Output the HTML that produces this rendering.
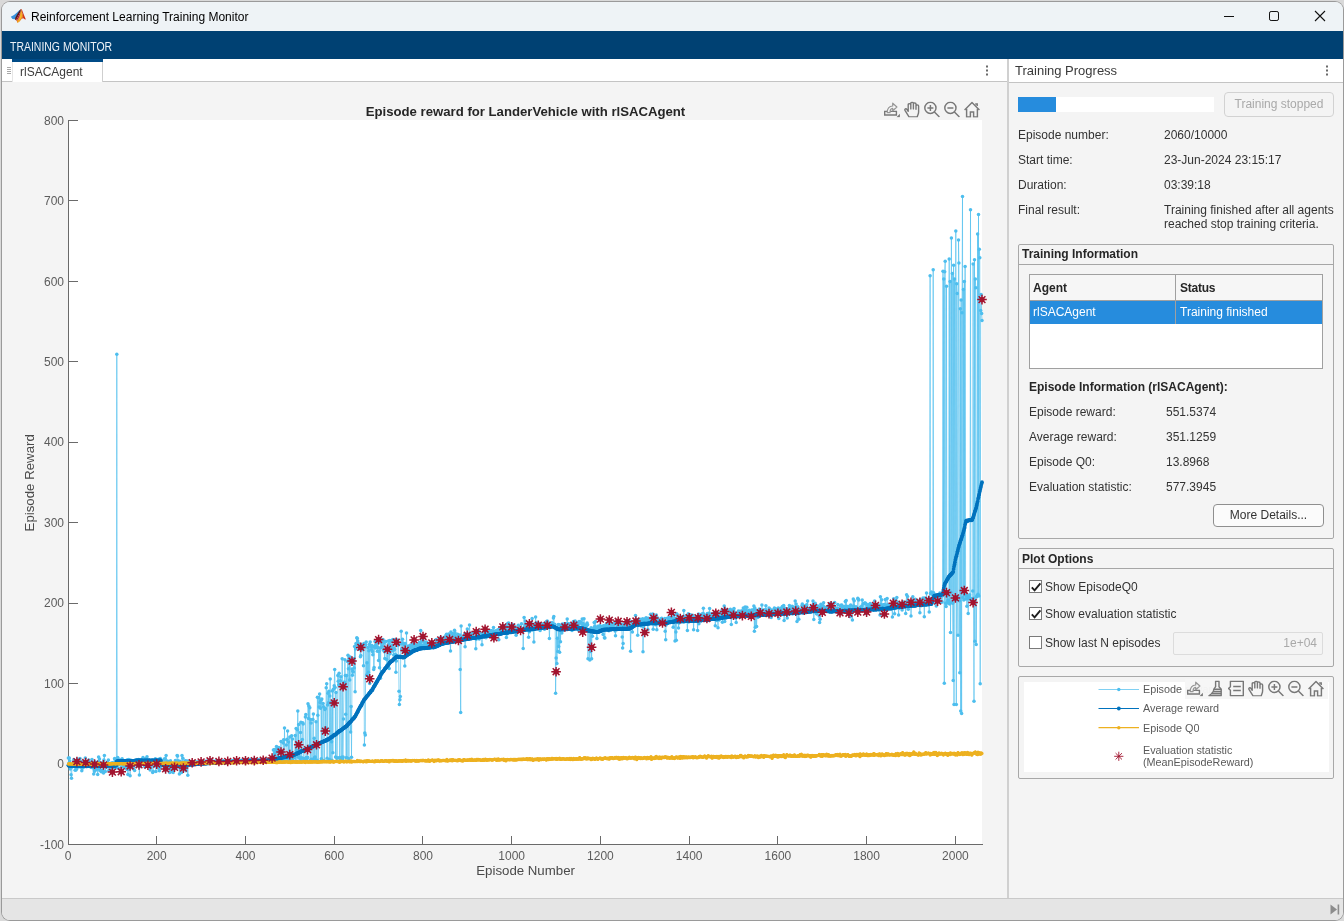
<!DOCTYPE html>
<html lang="en">
<head>
<meta charset="utf-8">
<title>Reinforcement Learning Training Monitor</title>
<style>
*{box-sizing:border-box;margin:0;padding:0}
html,body{width:1344px;height:921px;overflow:hidden}
body{position:relative;background:#d9d9d9;font-family:"Liberation Sans",Arial,sans-serif;font-size:12px;color:#2b2b2b}
.abs{position:absolute}
#win{position:absolute;left:2px;top:2px;width:1341px;height:918px;background:#f4f4f4;border-radius:8px;overflow:hidden;box-shadow:0 0 0 1px #9a9a9a;will-change:transform}
#titlebar{position:absolute;left:0;top:0;width:1341px;height:29px;background:#eef3f6}
#titletext{position:absolute;left:29px;top:7px;font-size:12px;line-height:16px;color:#000;white-space:nowrap}
#strip{position:absolute;left:0;top:29px;width:1341px;height:28px;background:#004173}
#striptext{position:absolute;left:8px;top:9px;font-size:12px;line-height:14px;color:#eef3f8;white-space:nowrap;transform:scaleX(0.872);transform-origin:0 0}
#tabbar{position:absolute;left:0;top:57px;width:1005px;height:23px;background:#fff;border-bottom:1px solid #c4c4c4}
#tab{position:absolute;left:10px;top:0;width:91px;height:23px;background:#fff;border-right:1px solid #cfcfcf;border-left:1px solid #e6e6e6}
#tab i{position:absolute;left:-1px;right:-1px;top:0;height:3px;background:#004b87}
#tab span{position:absolute;left:7px;top:6px;font-size:12px;line-height:14px;color:#3c3c3c}
#rhead{position:absolute;left:1006px;top:57px;width:335px;height:24px;background:#fff;border-bottom:1px solid #c4c4c4}
#rhead span{position:absolute;left:7px;top:4px;font-size:13px;line-height:16px;color:#3a3a3a}
#vdiv{position:absolute;left:1005px;top:57px;width:2px;height:860px;background:#d0d0d0}
#status{position:absolute;left:0;top:896px;width:1341px;height:22px;background:#e5e5e5;border-top:1px solid #c9c9c9}
.lbl{position:absolute;font-size:12px;line-height:14px;color:#333;white-space:nowrap}
.b{font-weight:bold}
.panel{position:absolute;border:1px solid #a8a8a8;background:#f4f4f4;border-radius:2px}
.phead{position:absolute;left:0;top:0;right:0;height:20px;border-bottom:1px solid #a6a6a6}
.phead span{position:absolute;left:3px;top:2px;font-weight:bold;font-size:12px;line-height:14px;color:#262626}
.btn{position:absolute;border:1px solid #8f8f8f;border-radius:4px;background:#fbfbfb;text-align:center;font-size:12px;color:#333}
.cb{position:absolute;width:13px;height:13px;border:1px solid #7a7a7a;background:#fff}
</style>
</head>
<body>
<div id="win">
  <div id="titlebar">
    <div id="titletext">Reinforcement Learning Training Monitor</div>
  </div>
  <div id="strip"><div id="striptext">TRAINING MONITOR</div></div>
  <div id="tabbar"><div id="tab"><i></i><span>rlSACAgent</span></div></div>
  <div id="rhead"><span>Training Progress</span></div>
  <div id="vdiv"></div>
  <svg id="chart" width="1006" height="840" viewBox="0 60 1006 840" style="position:absolute;left:-2px;top:58px">
<defs>
<marker id="mr" markerWidth="5" markerHeight="5" refX="2.5" refY="2.5" markerUnits="userSpaceOnUse"><circle cx="2.5" cy="2.5" r="1.75" fill="#4dbeee"/></marker>
<marker id="ma" markerWidth="5" markerHeight="5" refX="2.5" refY="2.5" markerUnits="userSpaceOnUse"><circle cx="2.5" cy="2.5" r="1.9" fill="#0072bd"/></marker>
<marker id="mq" markerWidth="4" markerHeight="4" refX="2" refY="2" markerUnits="userSpaceOnUse"><circle cx="2" cy="2" r="1.55" fill="#edb120"/></marker>
<g id="st" stroke="#a2142f" stroke-width="1.5"><path d="M-4.8 0H4.8M0 -4.8V4.8M-3.4 -3.4L3.4 3.4M-3.4 3.4L3.4 -3.4"/><circle r="2.6" fill="#a2142f" stroke="none"/></g>
</defs>
<rect x="68" y="120" width="914" height="725" fill="#fff"/>
<g stroke="#6a6a6a" stroke-width="1" fill="none" shape-rendering="crispEdges">
<path d="M68.5 120V844.5H982.5"/>
<path d="M68.5 844.5v-9"/>
<path d="M156.5 844.5v-9"/>
<path d="M245.5 844.5v-9"/>
<path d="M334.5 844.5v-9"/>
<path d="M422.5 844.5v-9"/>
<path d="M511.5 844.5v-9"/>
<path d="M600.5 844.5v-9"/>
<path d="M689.5 844.5v-9"/>
<path d="M777.5 844.5v-9"/>
<path d="M866.5 844.5v-9"/>
<path d="M955.5 844.5v-9"/>
<path d="M68.5 844.5h9"/>
<path d="M68.5 764.5h9"/>
<path d="M68.5 683.5h9"/>
<path d="M68.5 603.5h9"/>
<path d="M68.5 522.5h9"/>
<path d="M68.5 442.5h9"/>
<path d="M68.5 361.5h9"/>
<path d="M68.5 281.5h9"/>
<path d="M68.5 200.5h9"/>
<path d="M68.5 120.5h9"/>
</g>
<g fill="none" stroke-linejoin="round">
<polyline points="68.4,758.1 68.9,763.3 69.3,758.0 69.8,761.0 70.2,768.9 70.7,764.5 71.1,774.8 71.5,778.3 72.0,767.0 72.4,766.6 72.9,764.2 73.3,765.1 73.8,759.6 74.2,761.7 74.7,766.2 75.1,770.2 75.5,762.1 76.0,770.0 76.4,769.0 76.9,768.6 77.3,762.8 77.8,759.2 78.2,764.8 78.6,762.1 79.1,766.6 79.5,765.1 80.0,758.6 80.4,767.1 80.9,762.1 81.3,762.2 81.8,770.7 82.2,768.2 82.6,762.1 83.1,763.5 83.5,765.4 84.0,767.1 84.4,762.6 84.9,765.3 85.3,758.1 85.7,764.6 86.2,762.4 86.6,766.7 87.1,762.6 87.5,763.2 88.0,766.0 88.4,766.0 88.9,760.0 89.3,763.9 89.7,762.2 90.2,763.1 90.6,763.9 91.1,767.5 91.5,765.1 92.0,759.4 92.4,762.3 92.8,767.8 93.3,763.5 93.7,774.0 94.2,770.0 94.6,771.3 95.1,761.9 95.5,766.2 96.0,764.5 96.4,769.6 96.8,766.1 97.3,764.6 97.7,774.5 98.2,761.8 98.6,757.1 99.1,768.8 99.5,758.9 99.9,770.4 100.4,765.3 100.8,765.4 101.3,771.7 101.7,770.4 102.2,770.6 102.6,762.4 103.1,765.4 103.5,773.1 103.9,759.9 104.4,755.6 104.8,766.1 105.3,771.6 105.7,765.7 106.2,767.6 106.6,766.6 107.0,765.2 107.5,762.0 107.9,764.1 108.4,760.1 108.8,770.4 109.3,764.3 109.7,764.0 110.2,765.7 110.6,763.6 111.0,763.4 111.5,769.2 111.9,762.9 112.4,766.5 112.8,762.8 113.3,765.8 113.7,767.4 114.1,765.2 114.6,758.5 115.0,759.6 115.5,761.5 115.9,761.9 116.4,767.7 116.8,354.3 117.2,760.9 117.7,757.4 118.1,758.7 118.6,768.4 119.0,763.7 119.5,764.3 119.9,763.7 120.4,761.9 120.8,760.1 121.2,767.4 121.7,761.0 122.1,758.8 122.6,762.3 123.0,766.8 123.5,766.5 123.9,766.4 124.3,765.2 124.8,766.2 125.2,764.3 125.7,767.8 126.1,760.6 126.6,766.8 127.0,769.6 127.5,759.8 127.9,774.5 128.3,769.3 128.8,759.5 129.2,765.5 129.7,761.8 130.1,775.7 130.6,760.3 131.0,761.6 131.4,763.8 131.9,765.7 132.3,760.8 132.8,762.3 133.2,768.7 133.7,764.6 134.1,765.2 134.6,770.4 135.0,762.4 135.4,759.9 135.9,761.1 136.3,763.2 136.8,765.1 137.2,760.1 137.7,765.8 138.1,760.9 138.5,759.5 139.0,766.0 139.4,775.1 139.9,762.5 140.3,766.5 140.8,762.0 141.2,763.6 141.7,764.1 142.1,759.8 142.5,760.4 143.0,757.4 143.4,764.6 143.9,758.9 144.3,764.8 144.8,766.8 145.2,763.8 145.6,763.6 146.1,758.4 146.5,758.4 147.0,756.8 147.4,761.3 147.9,766.2 148.3,766.0 148.8,766.4 149.2,764.6 149.6,760.5 150.1,770.1 150.5,767.8 151.0,764.4 151.4,765.3 151.9,760.2 152.3,763.6 152.7,772.5 153.2,771.4 153.6,763.1 154.1,760.8 154.5,765.9 155.0,765.1 155.4,758.7 155.9,771.6 156.3,765.5 156.7,764.2 157.2,761.5 157.6,765.4 158.1,766.4 158.5,759.3 159.0,769.0 159.4,770.8 159.8,767.4 160.3,758.4 160.7,764.2 161.2,762.8 161.6,765.9 162.1,760.7 162.5,764.4 162.9,763.3 163.4,763.8 163.8,764.5 164.3,759.0 164.7,770.0 165.2,758.7 165.6,766.6 166.1,755.6 166.5,769.1 166.9,767.0 167.4,760.9 167.8,762.8 168.3,761.8 168.7,768.8 169.2,767.8 169.6,772.6 170.0,766.4 170.5,760.7 170.9,771.7 171.4,765.4 171.8,766.5 172.3,771.5 172.7,769.0 173.2,772.6 173.6,769.9 174.0,766.2 174.5,763.9 174.9,763.5 175.4,760.4 175.8,765.6 176.3,763.1 176.7,767.4 177.1,755.6 177.6,756.0 178.0,760.7 178.5,761.7 178.9,763.3 179.4,774.1 179.8,761.3 180.3,761.9 180.7,769.2 181.1,768.0 181.6,772.6 182.0,755.6 182.5,767.0 182.9,758.2 183.4,768.4 183.8,765.3 184.2,764.9 184.7,762.5 185.1,760.9 185.6,760.8 186.0,770.8 186.5,768.0 186.9,765.6 187.4,761.0 187.8,775.3 188.2,762.6 188.7,762.2 189.1,762.6 189.6,761.8 190.0,762.8 190.5,762.7 190.9,762.2 191.3,763.3 191.8,761.6 192.2,762.9 192.7,762.3 193.1,762.4 193.6,763.0 194.0,762.5 194.5,762.5 194.9,761.8 195.3,762.2 195.8,763.5 196.2,761.9 196.7,762.9 197.1,762.4 197.6,762.5 198.0,762.6 198.4,762.2 198.9,761.5 199.3,761.2 199.8,762.1 200.2,762.7 200.7,761.7 201.1,762.8 201.6,762.1 202.0,761.4 202.4,762.1 202.9,762.3 203.3,761.2 203.8,762.8 204.2,762.7 204.7,762.1 205.1,761.6 205.5,761.8 206.0,761.3 206.4,762.5 206.9,761.2 207.3,761.8 207.8,762.0 208.2,761.3 208.6,762.7 209.1,760.2 209.5,762.9 210.0,761.4 210.4,761.1 210.9,762.2 211.3,761.5 211.8,761.3 212.2,761.2 212.6,761.1 213.1,762.3 213.5,761.7 214.0,762.5 214.4,763.1 214.9,761.2 215.3,761.5 215.7,762.1 216.2,761.8 216.6,760.6 217.1,761.4 217.5,762.3 218.0,761.4 218.4,761.1 218.9,761.6 219.3,762.4 219.7,761.6 220.2,762.1 220.6,761.7 221.1,761.0 221.5,761.9 222.0,762.2 222.4,761.4 222.8,761.1 223.3,761.0 223.7,761.8 224.2,761.6 224.6,761.4 225.1,762.2 225.5,761.8 226.0,761.4 226.4,761.3 226.8,761.3 227.3,761.5 227.7,762.4 228.2,762.0 228.6,761.0 229.1,760.5 229.5,760.5 229.9,761.8 230.4,761.2 230.8,761.0 231.3,761.4 231.7,761.0 232.2,762.0 232.6,760.7 233.1,761.1 233.5,761.3 233.9,760.9 234.4,762.3 234.8,761.1 235.3,761.4 235.7,762.0 236.2,760.8 236.6,761.6 237.0,760.5 237.5,761.8 237.9,761.2 238.4,760.8 238.8,761.0 239.3,760.7 239.7,760.5 240.2,760.9 240.6,761.0 241.0,761.3 241.5,761.0 241.9,761.0 242.4,760.1 242.8,760.8 243.3,760.7 243.7,761.6 244.1,761.0 244.6,759.5 245.0,760.0 245.5,761.0 245.9,761.1 246.4,759.8 246.8,760.3 247.3,761.3 247.7,760.2 248.1,760.9 248.6,761.4 249.0,760.7 249.5,760.9 249.9,759.6 250.4,760.8 250.8,760.8 251.2,761.3 251.7,759.9 252.1,760.1 252.6,760.5 253.0,760.5 253.5,760.3 253.9,759.3 254.3,760.9 254.8,760.3 255.2,759.5 255.7,761.0 256.1,760.4 256.6,761.1 257.0,760.5 257.5,760.7 257.9,759.8 258.3,760.2 258.8,760.7 259.2,760.2 259.7,760.8 260.1,760.1 260.6,759.7 261.0,760.2 261.4,760.1 261.9,759.8 262.3,760.2 262.8,760.0 263.2,760.8 263.7,761.2 264.1,759.9 264.6,759.9 265.0,759.6 265.4,760.8 265.9,759.6 266.3,761.0 266.8,760.1 267.2,760.6 267.7,759.4 268.1,761.0 268.5,759.6 269.0,761.4 269.4,760.3 269.9,760.4 270.3,761.3 270.8,759.9 271.2,759.6 271.7,758.9 272.1,759.4 272.5,758.2 273.0,759.0 273.4,750.0 273.9,756.8 274.3,749.6 274.8,753.6 275.2,749.7 275.6,757.9 276.1,750.4 276.5,746.6 277.0,757.1 277.4,748.9 277.9,759.2 278.3,760.7 278.8,747.4 279.2,758.3 279.6,758.5 280.1,761.4 280.5,760.2 281.0,741.5 281.4,760.8 281.9,761.2 282.3,761.1 282.7,758.4 283.2,742.9 283.6,739.7 284.1,760.1 284.5,727.9 285.0,760.5 285.4,758.7 285.9,761.2 286.3,745.0 286.7,739.7 287.2,739.3 287.6,731.1 288.1,758.7 288.5,742.0 289.0,760.2 289.4,758.1 289.8,736.9 290.3,760.3 290.7,761.4 291.2,759.6 291.6,735.7 292.1,758.4 292.5,738.9 293.0,758.7 293.4,757.5 293.8,757.0 294.3,757.4 294.7,756.9 295.2,735.5 295.6,761.4 296.1,728.4 296.5,750.4 296.9,761.4 297.4,729.7 297.8,711.0 298.3,757.3 298.7,724.5 299.2,756.7 299.6,745.5 300.0,759.1 300.5,732.6 300.9,722.2 301.4,761.6 301.8,757.8 302.3,739.4 302.7,722.8 303.2,723.9 303.6,758.5 304.0,759.6 304.5,761.4 304.9,759.8 305.4,717.0 305.8,714.6 306.3,757.6 306.7,760.5 307.1,758.3 307.6,757.3 308.0,703.7 308.5,718.4 308.9,706.1 309.4,745.9 309.8,707.7 310.3,760.0 310.7,719.4 311.1,722.9 311.6,759.3 312.0,759.6 312.5,759.6 312.9,719.4 313.4,714.1 313.8,759.4 314.2,738.3 314.7,757.6 315.1,756.9 315.6,761.5 316.0,721.7 316.5,760.1 316.9,761.0 317.4,697.3 317.8,715.2 318.2,761.2 318.7,697.5 319.1,706.9 319.6,693.9 320.0,702.5 320.5,708.2 320.9,700.3 321.3,758.8 321.8,699.1 322.2,761.5 322.7,760.8 323.1,703.4 323.6,706.7 324.0,761.1 324.5,761.1 324.9,709.4 325.3,708.6 325.8,728.0 326.2,687.8 326.7,683.7 327.1,758.2 327.6,705.0 328.0,693.2 328.4,702.7 328.9,691.3 329.3,759.5 329.8,696.1 330.2,678.9 330.7,761.2 331.1,702.6 331.6,741.8 332.0,760.3 332.4,690.9 332.9,752.7 333.3,689.3 333.8,689.0 334.2,685.8 334.7,669.4 335.1,687.6 335.5,757.0 336.0,692.5 336.4,761.2 336.9,758.0 337.3,758.1 337.8,675.6 338.2,681.3 338.7,684.7 339.1,673.2 339.5,757.6 340.0,758.8 340.4,680.8 340.9,676.7 341.3,760.6 341.8,757.3 342.2,658.7 342.6,758.9 343.1,757.1 343.5,718.9 344.0,682.7 344.4,682.0 344.9,659.8 345.3,675.5 345.7,714.2 346.2,757.8 346.6,675.6 347.1,758.1 347.5,661.4 348.0,655.3 348.4,668.7 348.9,758.8 349.3,658.6 349.7,680.1 350.2,656.9 350.6,732.1 351.1,706.4 351.5,757.2 352.0,669.1 352.4,675.2 352.8,671.2 353.3,672.0 353.7,658.8 354.2,667.9 354.6,646.6 355.1,691.7 355.5,649.1 356.0,643.4 356.4,644.4 356.8,637.8 357.3,638.4 357.7,641.1 358.2,643.3 358.6,646.6 359.1,649.3 359.5,645.7 359.9,644.2 360.4,656.7 360.8,655.5 361.3,645.0 361.7,645.0 362.2,649.0 362.6,649.7 363.1,647.1 363.5,665.8 363.9,643.4 364.4,745.1 364.8,733.0 365.3,735.1 365.7,645.0 366.2,641.9 366.6,675.1 367.0,662.7 367.5,675.6 367.9,647.4 368.4,672.3 368.8,650.7 369.3,644.4 369.7,683.6 370.2,642.1 370.6,646.0 371.0,646.6 371.5,649.4 371.9,645.5 372.4,651.5 372.8,654.7 373.3,646.8 373.7,669.4 374.1,667.5 374.6,646.2 375.0,641.4 375.5,648.1 375.9,645.2 376.4,647.0 376.8,642.8 377.3,651.3 377.7,647.5 378.1,638.8 378.6,660.4 379.0,651.3 379.5,667.8 379.9,648.1 380.4,678.2 380.8,642.8 381.2,647.8 381.7,640.3 382.1,646.0 382.6,640.7 383.0,639.5 383.5,650.3 383.9,643.0 384.4,651.7 384.8,658.5 385.2,641.6 385.7,641.6 386.1,648.3 386.6,659.4 387.0,665.2 387.5,648.7 387.9,665.9 388.3,641.1 388.8,644.0 389.2,668.5 389.7,640.5 390.1,653.8 390.6,648.1 391.0,641.0 391.5,647.4 391.9,651.1 392.3,645.5 392.8,639.5 393.2,650.6 393.7,655.1 394.1,648.6 394.6,649.6 395.0,639.4 395.4,654.5 395.9,672.2 396.3,661.0 396.8,656.3 397.2,644.7 397.7,639.9 398.1,645.3 398.5,642.5 399.0,691.3 399.4,704.5 399.9,699.7 400.3,696.5 400.8,643.7 401.2,631.3 401.7,648.7 402.1,649.9 402.5,639.3 403.0,642.9 403.4,652.0 403.9,644.4 404.3,649.7 404.8,665.9 405.2,643.4 405.6,655.5 406.1,654.4 406.5,632.9 407.0,651.9 407.4,651.1 407.9,653.2 408.3,646.0 408.8,648.3 409.2,650.9 409.6,647.4 410.1,653.4 410.5,645.0 411.0,648.1 411.4,646.1 411.9,652.7 412.3,647.5 412.7,644.0 413.2,648.5 413.6,649.4 414.1,644.9 414.5,644.2 415.0,645.3 415.4,647.3 415.9,649.5 416.3,646.5 416.7,647.3 417.2,646.0 417.6,644.7 418.1,648.8 418.5,646.5 419.0,645.7 419.4,642.6 419.8,645.9 420.3,644.2 420.7,630.5 421.2,642.1 421.6,646.1 422.1,645.9 422.5,648.1 423.0,640.3 423.4,645.2 423.8,645.9 424.3,645.3 424.7,642.4 425.2,645.5 425.6,646.1 426.1,645.5 426.5,641.9 426.9,643.6 427.4,647.5 427.8,647.5 428.3,643.6 428.7,643.4 429.2,644.6 429.6,645.4 430.1,644.0 430.5,648.1 430.9,646.2 431.4,644.3 431.8,641.8 432.3,646.3 432.7,643.1 433.2,646.4 433.6,643.5 434.0,644.8 434.5,646.8 434.9,646.6 435.4,646.8 435.8,640.1 436.3,639.6 436.7,641.7 437.2,643.4 437.6,642.4 438.0,644.8 438.5,645.0 438.9,645.0 439.4,641.3 439.8,641.1 440.3,642.2 440.7,637.4 441.1,640.2 441.6,643.2 442.0,640.2 442.5,641.7 442.9,640.4 443.4,639.9 443.8,640.8 444.2,637.3 444.7,638.6 445.1,637.6 445.6,637.6 446.0,635.5 446.5,634.3 446.9,641.5 447.4,638.3 447.8,639.2 448.2,639.3 448.7,633.9 449.1,640.3 449.6,637.9 450.0,638.5 450.5,650.9 450.9,632.1 451.3,640.3 451.8,638.6 452.2,633.5 452.7,636.6 453.1,638.5 453.6,636.8 454.0,634.6 454.5,630.3 454.9,632.6 455.3,636.3 455.8,640.5 456.2,638.4 456.7,639.8 457.1,638.6 457.6,634.2 458.0,639.0 458.4,638.9 458.9,638.5 459.3,637.8 459.8,634.9 460.2,669.5 460.7,712.6 461.1,626.1 461.6,638.9 462.0,639.6 462.4,637.4 462.9,637.9 463.3,637.7 463.8,636.0 464.2,639.2 464.7,634.0 465.1,646.8 465.5,637.1 466.0,637.9 466.4,638.1 466.9,633.6 467.3,629.0 467.8,637.1 468.2,635.2 468.7,633.9 469.1,636.7 469.5,624.9 470.0,634.0 470.4,634.3 470.9,637.1 471.3,634.8 471.8,633.3 472.2,637.8 472.6,633.9 473.1,637.0 473.5,632.9 474.0,637.3 474.4,638.3 474.9,637.3 475.3,631.9 475.8,648.8 476.2,639.2 476.6,632.9 477.1,634.4 477.5,636.7 478.0,635.1 478.4,630.4 478.9,636.8 479.3,638.9 479.7,635.9 480.2,637.3 480.6,633.3 481.1,637.2 481.5,634.9 482.0,644.7 482.4,635.0 482.9,634.9 483.3,633.0 483.7,632.4 484.2,635.1 484.6,634.2 485.1,630.9 485.5,632.3 486.0,637.7 486.4,633.7 486.8,634.7 487.3,634.1 487.7,634.6 488.2,633.5 488.6,631.0 489.1,630.8 489.5,631.4 489.9,633.3 490.4,635.5 490.8,630.5 491.3,630.7 491.7,632.8 492.2,630.9 492.6,631.5 493.1,631.8 493.5,627.5 493.9,632.1 494.4,633.1 494.8,631.4 495.3,631.1 495.7,631.2 496.2,632.6 496.6,631.0 497.0,631.3 497.5,632.7 497.9,629.7 498.4,632.7 498.8,639.7 499.3,629.7 499.7,632.2 500.2,627.8 500.6,629.0 501.0,630.6 501.5,628.4 501.9,632.6 502.4,628.4 502.8,633.3 503.3,626.1 503.7,626.1 504.1,630.4 504.6,628.2 505.0,631.6 505.5,628.4 505.9,626.4 506.4,637.6 506.8,633.9 507.3,630.4 507.7,623.5 508.1,631.6 508.6,623.0 509.0,631.7 509.5,628.5 509.9,627.5 510.4,627.5 510.8,632.8 511.2,628.3 511.7,628.2 512.1,624.4 512.6,631.9 513.0,629.7 513.5,624.9 513.9,631.7 514.4,628.9 514.8,626.8 515.2,628.8 515.7,628.5 516.1,635.2 516.6,631.5 517.0,630.8 517.5,629.9 517.9,629.8 518.3,625.3 518.8,629.0 519.2,629.5 519.7,630.1 520.1,628.2 520.6,627.5 521.0,628.0 521.5,623.8 521.9,629.3 522.3,631.0 522.8,628.6 523.2,648.6 523.7,629.3 524.1,617.4 524.6,627.5 525.0,625.1 525.4,621.1 525.9,625.2 526.3,624.4 526.8,626.6 527.2,626.1 527.7,627.2 528.1,628.6 528.6,637.3 529.0,627.9 529.4,631.7 529.9,627.1 530.3,625.8 530.8,623.0 531.2,625.7 531.7,626.8 532.1,618.5 532.5,630.1 533.0,626.0 533.4,628.3 533.9,642.0 534.3,624.0 534.8,626.6 535.2,625.1 535.6,617.0 536.1,624.1 536.5,622.8 537.0,624.4 537.4,624.6 537.9,627.3 538.3,626.7 538.8,625.7 539.2,624.1 539.6,623.6 540.1,630.4 540.5,628.5 541.0,624.3 541.4,626.1 541.9,626.0 542.3,625.5 542.7,624.7 543.2,624.0 543.6,623.7 544.1,627.6 544.5,629.3 545.0,624.2 545.4,624.8 545.9,623.6 546.3,621.8 546.7,625.2 547.2,621.1 547.6,621.7 548.1,623.6 548.5,625.9 549.0,626.5 549.4,638.6 549.8,625.4 550.3,623.6 550.7,624.2 551.2,624.3 551.6,622.8 552.1,623.2 552.5,623.2 553.0,625.6 553.4,618.1 553.8,616.5 554.3,625.0 554.7,624.2 555.2,627.0 555.6,693.3 556.1,657.9 556.5,628.5 556.9,663.5 557.4,638.3 557.8,651.4 558.3,624.6 558.7,646.6 559.2,624.8 559.6,652.2 560.1,626.4 560.5,641.8 560.9,625.7 561.4,625.2 561.8,632.9 562.3,623.9 562.7,627.8 563.2,624.4 563.6,630.1 564.0,627.6 564.5,623.8 564.9,628.9 565.4,625.1 565.8,627.8 566.3,627.3 566.7,624.2 567.2,618.9 567.6,623.5 568.0,625.5 568.5,623.8 568.9,629.3 569.4,625.1 569.8,623.9 570.3,628.2 570.7,624.8 571.1,626.3 571.6,625.6 572.0,630.4 572.5,625.2 572.9,627.0 573.4,621.5 573.8,627.3 574.3,627.8 574.7,624.0 575.1,621.0 575.6,626.7 576.0,625.5 576.5,623.4 576.9,622.5 577.4,625.4 577.8,628.6 578.2,625.9 578.7,630.2 579.1,621.6 579.6,623.2 580.0,622.8 580.5,621.7 580.9,628.7 581.3,629.3 581.8,628.8 582.2,618.9 582.7,624.8 583.1,623.5 583.6,626.2 584.0,618.8 584.5,626.4 584.9,626.0 585.3,625.5 585.8,629.0 586.2,626.1 586.7,624.3 587.1,622.9 587.6,624.7 588.0,658.7 588.4,630.0 588.9,629.7 589.3,629.9 589.8,660.0 590.2,629.4 590.7,651.4 591.1,627.7 591.6,658.7 592.0,630.1 592.4,636.3 592.9,630.8 593.3,629.6 593.8,628.1 594.2,622.4 594.7,626.6 595.1,628.4 595.5,621.6 596.0,630.3 596.4,629.9 596.9,638.6 597.3,628.7 597.8,626.2 598.2,627.6 598.7,629.6 599.1,629.6 599.5,626.2 600.0,625.6 600.4,631.6 600.9,626.9 601.3,627.8 601.8,629.9 602.2,626.5 602.6,626.8 603.1,634.4 603.5,625.7 604.0,626.1 604.4,637.8 604.9,638.1 605.3,627.5 605.8,627.8 606.2,624.8 606.6,623.4 607.1,623.5 607.5,628.3 608.0,627.4 608.4,627.8 608.9,630.8 609.3,625.2 609.7,625.9 610.2,625.6 610.6,629.7 611.1,625.4 611.5,623.0 612.0,627.1 612.4,629.2 612.9,625.8 613.3,624.2 613.7,624.9 614.2,629.4 614.6,623.2 615.1,631.0 615.5,635.8 616.0,623.3 616.4,621.0 616.8,627.7 617.3,626.8 617.7,629.0 618.2,624.0 618.6,626.8 619.1,625.5 619.5,623.5 620.0,622.8 620.4,628.0 620.8,626.8 621.3,624.6 621.7,626.5 622.2,637.0 622.6,647.9 623.1,643.4 623.5,624.6 623.9,626.0 624.4,624.0 624.8,625.0 625.3,626.4 625.7,627.4 626.2,622.3 626.6,624.4 627.0,626.9 627.5,625.2 627.9,624.2 628.4,626.6 628.8,620.8 629.3,628.9 629.7,625.8 630.2,625.4 630.6,651.2 631.0,625.0 631.5,621.6 631.9,624.6 632.4,632.0 632.8,624.3 633.3,624.2 633.7,624.8 634.1,622.4 634.6,623.1 635.0,621.9 635.5,615.5 635.9,621.2 636.4,619.6 636.8,621.1 637.3,621.2 637.7,635.3 638.1,624.8 638.6,621.5 639.0,622.7 639.5,621.5 639.9,619.2 640.4,621.2 640.8,619.5 641.2,625.9 641.7,621.5 642.1,622.4 642.6,618.7 643.0,651.7 643.5,626.6 643.9,622.2 644.4,621.4 644.8,619.0 645.2,620.2 645.7,620.8 646.1,617.8 646.6,619.9 647.0,618.6 647.5,623.5 647.9,629.4 648.3,618.2 648.8,620.0 649.2,619.0 649.7,622.3 650.1,619.8 650.6,614.2 651.0,620.5 651.5,619.2 651.9,619.0 652.3,623.7 652.8,614.0 653.2,629.2 653.7,621.8 654.1,619.8 654.6,619.4 655.0,619.0 655.4,624.7 655.9,617.0 656.3,614.9 656.8,629.7 657.2,619.3 657.7,618.1 658.1,619.6 658.6,620.5 659.0,621.6 659.4,622.1 659.9,624.1 660.3,621.1 660.8,623.0 661.2,618.8 661.7,618.2 662.1,619.8 662.5,622.6 663.0,621.2 663.4,622.2 663.9,621.3 664.3,623.0 664.8,618.4 665.2,631.3 665.7,639.7 666.1,625.0 666.5,623.1 667.0,622.5 667.4,618.2 667.9,622.0 668.3,622.5 668.8,617.6 669.2,619.3 669.6,617.5 670.1,619.0 670.5,619.9 671.0,618.3 671.4,619.7 671.9,617.4 672.3,620.5 672.7,620.5 673.2,627.3 673.6,621.9 674.1,615.3 674.5,618.7 675.0,641.0 675.4,618.6 675.9,632.1 676.3,640.2 676.7,613.7 677.2,614.7 677.6,615.6 678.1,619.7 678.5,628.0 679.0,623.1 679.4,620.6 679.8,621.0 680.3,618.6 680.7,619.7 681.2,617.1 681.6,618.1 682.1,617.8 682.5,617.2 683.0,619.3 683.4,618.3 683.8,610.6 684.3,622.0 684.7,617.4 685.2,619.3 685.6,616.9 686.1,615.8 686.5,618.1 686.9,620.0 687.4,630.5 687.8,617.5 688.3,613.8 688.7,621.9 689.2,619.4 689.6,617.9 690.1,615.7 690.5,614.8 690.9,616.6 691.4,615.8 691.8,617.8 692.3,619.7 692.7,615.3 693.2,617.2 693.6,629.7 694.0,618.6 694.5,620.3 694.9,617.5 695.4,619.6 695.8,619.4 696.3,617.1 696.7,619.4 697.2,620.7 697.6,630.5 698.0,617.0 698.5,614.0 698.9,623.8 699.4,617.1 699.8,614.9 700.3,615.0 700.7,619.8 701.1,616.6 701.6,616.8 702.0,614.1 702.5,619.0 702.9,613.8 703.4,608.2 703.8,614.0 704.3,620.0 704.7,615.8 705.1,618.3 705.6,616.5 706.0,615.8 706.5,617.2 706.9,617.1 707.4,613.4 707.8,617.5 708.2,617.4 708.7,613.5 709.1,613.2 709.6,608.5 710.0,615.8 710.5,618.7 710.9,616.4 711.4,614.3 711.8,618.3 712.2,615.7 712.7,613.6 713.1,619.0 713.6,617.4 714.0,617.4 714.5,615.1 714.9,617.3 715.3,625.7 715.8,614.0 716.2,619.6 716.7,620.4 717.1,613.2 717.6,616.9 718.0,627.7 718.4,614.6 718.9,613.9 719.3,619.9 719.8,617.4 720.2,612.7 720.7,616.2 721.1,614.8 721.6,617.1 722.0,610.0 722.4,622.3 722.9,616.1 723.3,615.4 723.8,614.3 724.2,606.1 724.7,621.4 725.1,609.1 725.5,610.1 726.0,613.1 726.4,615.8 726.9,611.4 727.3,610.6 727.8,615.8 728.2,614.0 728.7,611.6 729.1,611.2 729.5,614.9 730.0,611.1 730.4,609.2 730.9,614.5 731.3,624.4 731.8,611.0 732.2,612.7 732.6,611.4 733.1,612.0 733.5,609.8 734.0,608.6 734.4,611.9 734.9,613.3 735.3,613.7 735.8,617.9 736.2,622.6 736.6,615.1 737.1,615.6 737.5,614.1 738.0,616.5 738.4,611.0 738.9,612.2 739.3,615.8 739.7,611.6 740.2,611.3 740.6,614.8 741.1,612.4 741.5,613.1 742.0,610.8 742.4,613.4 742.9,611.9 743.3,608.0 743.7,612.0 744.2,611.7 744.6,610.0 745.1,607.1 745.5,613.2 746.0,610.5 746.4,613.1 746.8,607.2 747.3,615.4 747.7,612.2 748.2,611.1 748.6,614.8 749.1,610.2 749.5,612.7 750.0,612.2 750.4,613.1 750.8,613.9 751.3,612.3 751.7,610.1 752.2,611.8 752.6,612.6 753.1,615.6 753.5,609.8 753.9,606.1 754.4,631.3 754.8,608.0 755.3,627.3 755.7,610.0 756.2,614.3 756.6,626.5 757.1,610.9 757.5,613.4 757.9,617.2 758.4,616.8 758.8,613.4 759.3,608.9 759.7,613.6 760.2,611.4 760.6,614.8 761.0,610.0 761.5,614.6 761.9,605.0 762.4,611.4 762.8,614.4 763.3,612.8 763.7,610.0 764.1,612.6 764.6,614.5 765.0,614.1 765.5,609.4 765.9,605.8 766.4,613.3 766.8,611.4 767.3,611.6 767.7,611.1 768.1,612.7 768.6,612.1 769.0,607.9 769.5,613.1 769.9,609.0 770.4,614.1 770.8,611.8 771.2,617.5 771.7,611.5 772.1,610.0 772.6,611.3 773.0,612.9 773.5,612.4 773.9,610.6 774.4,608.0 774.8,609.9 775.2,611.2 775.7,608.8 776.1,613.5 776.6,612.8 777.0,610.0 777.5,611.4 777.9,612.4 778.3,607.9 778.8,618.6 779.2,611.1 779.7,609.2 780.1,609.2 780.6,609.8 781.0,608.3 781.5,610.7 781.9,614.6 782.3,606.4 782.8,610.1 783.2,610.8 783.7,605.5 784.1,620.6 784.6,610.9 785.0,608.2 785.4,613.7 785.9,613.7 786.3,610.5 786.8,609.0 787.2,617.9 787.7,611.7 788.1,611.1 788.6,609.3 789.0,612.6 789.4,605.6 789.9,607.3 790.3,608.8 790.8,608.2 791.2,610.9 791.7,608.5 792.1,606.2 792.5,614.1 793.0,606.9 793.4,611.8 793.9,608.1 794.3,608.6 794.8,611.7 795.2,601.1 795.7,607.0 796.1,604.0 796.5,608.6 797.0,621.6 797.4,609.1 797.9,606.8 798.3,612.4 798.8,619.2 799.2,610.1 799.6,609.2 800.1,611.2 800.5,610.0 801.0,609.7 801.4,609.8 801.9,605.7 802.3,604.0 802.8,607.4 803.2,605.8 803.6,610.0 804.1,606.1 804.5,609.3 805.0,608.4 805.4,607.9 805.9,606.0 806.3,607.3 806.7,604.8 807.2,610.3 807.6,601.0 808.1,608.8 808.5,611.5 809.0,608.7 809.4,608.8 809.8,608.4 810.3,608.5 810.7,607.2 811.2,610.6 811.6,606.5 812.1,607.5 812.5,608.2 813.0,600.9 813.4,603.9 813.8,619.6 814.3,609.0 814.7,606.7 815.2,603.3 815.6,610.1 816.1,608.1 816.5,613.4 816.9,613.9 817.4,610.2 817.8,606.0 818.3,609.5 818.7,607.1 819.2,616.0 819.6,622.5 820.1,619.3 820.5,607.0 820.9,604.2 821.4,607.9 821.8,607.5 822.3,606.0 822.7,607.5 823.2,606.0 823.6,602.7 824.0,609.4 824.5,607.6 824.9,611.0 825.4,607.4 825.8,608.7 826.3,607.2 826.7,609.8 827.2,607.8 827.6,609.3 828.0,607.0 828.5,605.9 828.9,606.0 829.4,609.5 829.8,603.4 830.3,608.7 830.7,609.0 831.1,603.2 831.6,608.2 832.0,609.0 832.5,609.1 832.9,610.4 833.4,608.3 833.8,608.7 834.3,610.3 834.7,602.5 835.1,608.6 835.6,607.9 836.0,608.2 836.5,610.7 836.9,611.8 837.4,610.3 837.8,604.4 838.2,608.4 838.7,609.1 839.1,610.4 839.6,610.1 840.0,611.4 840.5,606.0 840.9,605.2 841.4,606.7 841.8,605.1 842.2,607.6 842.7,612.8 843.1,607.1 843.6,609.4 844.0,606.4 844.5,610.5 844.9,607.5 845.3,601.6 845.8,609.6 846.2,600.4 846.7,606.2 847.1,608.9 847.6,611.2 848.0,607.2 848.5,609.8 848.9,606.7 849.3,608.8 849.8,606.1 850.2,616.8 850.7,604.9 851.1,609.5 851.6,609.3 852.0,609.2 852.4,619.9 852.9,606.6 853.3,599.1 853.8,606.1 854.2,600.8 854.7,608.1 855.1,607.7 855.5,609.9 856.0,606.7 856.4,607.6 856.9,607.7 857.3,608.9 857.8,598.3 858.2,599.3 858.7,600.1 859.1,611.3 859.5,609.0 860.0,611.1 860.4,607.2 860.9,607.5 861.3,609.0 861.8,606.0 862.2,600.0 862.6,609.7 863.1,603.7 863.5,609.7 864.0,610.2 864.4,603.3 864.9,603.2 865.3,603.0 865.8,613.6 866.2,603.9 866.6,608.3 867.1,611.6 867.5,604.9 868.0,605.7 868.4,607.6 868.9,605.1 869.3,604.8 869.7,605.2 870.2,603.5 870.6,607.4 871.1,607.0 871.5,607.5 872.0,606.1 872.4,605.9 872.9,604.7 873.3,606.0 873.7,610.3 874.2,607.9 874.6,601.1 875.1,608.2 875.5,608.7 876.0,610.2 876.4,608.9 876.8,605.1 877.3,609.5 877.7,606.6 878.2,604.8 878.6,606.0 879.1,606.1 879.5,607.3 880.0,614.9 880.4,596.7 880.8,606.2 881.3,604.5 881.7,599.7 882.2,607.1 882.6,605.4 883.1,607.5 883.5,606.7 883.9,604.8 884.4,604.4 884.8,607.7 885.3,599.6 885.7,609.6 886.2,606.9 886.6,606.2 887.1,598.6 887.5,604.7 887.9,606.8 888.4,604.9 888.8,605.8 889.3,607.6 889.7,605.2 890.2,607.1 890.6,605.8 891.0,605.4 891.5,606.0 891.9,606.3 892.4,616.9 892.8,606.8 893.3,604.7 893.7,598.8 894.2,605.9 894.6,613.7 895.0,600.2 895.5,607.4 895.9,605.1 896.4,606.2 896.8,597.5 897.3,602.1 897.7,602.7 898.1,605.4 898.6,615.1 899.0,604.8 899.5,608.0 899.9,603.8 900.4,606.8 900.8,603.5 901.2,606.9 901.7,606.0 902.1,610.0 902.6,603.2 903.0,602.6 903.5,601.9 903.9,607.2 904.4,604.6 904.8,603.5 905.2,606.8 905.7,613.6 906.1,602.4 906.6,594.7 907.0,601.9 907.5,596.4 907.9,603.6 908.3,609.3 908.8,603.6 909.2,601.1 909.7,604.5 910.1,604.5 910.6,601.8 911.0,616.0 911.5,605.5 911.9,601.7 912.3,605.3 912.8,596.7 913.2,600.4 913.7,602.0 914.1,603.3 914.6,604.0 915.0,603.9 915.4,599.3 915.9,599.9 916.3,603.2 916.8,601.1 917.2,602.0 917.7,603.7 918.1,604.2 918.6,603.4 919.0,602.0 919.4,603.8 919.9,612.7 920.3,599.4 920.8,603.6 921.2,602.2 921.7,601.0 922.1,599.9 922.5,603.9 923.0,597.9 923.4,603.5 923.9,600.9 924.3,616.8 924.8,598.0 925.2,601.5 925.7,604.7 926.1,602.7 926.5,593.0 927.0,599.3 927.4,600.1 927.9,602.9 928.3,600.6 928.8,604.1 929.2,612.0 929.6,598.3 930.1,275.8 930.5,593.5 931.0,593.4 931.4,591.9 931.9,594.3 932.3,593.5 932.8,602.8 933.2,269.7 933.6,592.7 934.1,595.1 934.5,596.8 935.0,597.1 935.4,597.6 935.9,602.2 936.3,606.1 936.7,599.6 937.2,597.6 937.6,595.0 938.1,597.6 938.5,598.3 939.0,596.0 939.4,597.6 939.9,592.9 940.3,596.3 940.7,602.3 941.2,602.1 941.6,595.3 942.1,601.9 942.5,595.7 943.0,271.2 943.4,591.1 943.8,279.0 944.3,683.2 944.7,271.7 945.2,261.3 945.6,603.2 946.1,606.4 946.5,286.2 946.9,603.2 947.4,596.1 947.8,600.9 948.3,600.0 948.7,602.0 949.2,258.9 949.6,604.0 950.1,281.4 950.5,632.6 950.9,592.3 951.4,238.0 951.8,602.4 952.3,273.4 952.7,603.2 953.2,680.4 953.6,265.3 954.0,704.5 954.5,279.0 954.9,599.1 955.4,600.0 955.8,231.0 956.3,704.5 956.7,283.8 957.2,293.5 957.6,596.7 958.0,635.3 958.5,240.0 958.9,262.9 959.4,600.8 959.8,672.7 960.3,308.7 960.7,711.0 961.1,299.9 961.6,713.4 962.0,312.8 962.5,196.4 962.9,597.5 963.4,289.4 963.8,600.0 964.3,281.4 964.7,595.1 965.1,266.4 965.6,599.1 966.0,593.6 966.5,596.0 966.9,606.2 967.4,596.1 967.8,598.8 968.2,613.6 968.7,598.0 969.1,596.7 969.6,594.8 970.0,598.1 970.5,209.8 970.9,600.0 971.4,598.8 971.8,599.4 972.2,599.7 972.7,591.1 973.1,264.0 973.6,598.3 974.0,701.3 974.5,259.7 974.9,641.3 975.3,279.0 975.8,287.8 976.2,644.6 976.7,596.7 977.1,595.5 977.6,233.9 978.0,594.3 978.5,214.6 978.9,595.9 979.3,249.2 979.8,257.7 980.2,683.8 980.7,310.4 981.1,294.5 981.6,313.6 982.0,320.4" stroke="#4dbeee" stroke-width="0.65" marker-start="url(#mr)" marker-mid="url(#mr)" marker-end="url(#mr)"/>
<polyline points="68.4,765.3 68.9,765.8 69.3,765.7 69.8,765.6 70.2,765.8 70.7,765.7 71.1,765.7 71.5,766.0 72.0,765.5 72.4,765.6 72.9,765.8 73.3,765.7 73.8,765.6 74.2,765.8 74.7,765.8 75.1,766.0 75.5,765.6 76.0,765.7 76.4,765.7 76.9,766.0 77.3,765.4 77.8,765.7 78.2,765.8 78.6,765.3 79.1,765.8 79.5,766.0 80.0,765.8 80.4,766.2 80.9,765.5 81.3,765.8 81.8,765.9 82.2,765.6 82.6,766.1 83.1,765.7 83.5,766.2 84.0,765.9 84.4,766.0 84.9,765.5 85.3,765.4 85.7,765.9 86.2,765.6 86.6,765.8 87.1,765.7 87.5,766.0 88.0,766.2 88.4,766.2 88.9,765.7 89.3,765.4 89.7,765.8 90.2,765.9 90.6,765.4 91.1,765.8 91.5,765.8 92.0,765.8 92.4,765.8 92.8,765.9 93.3,766.1 93.7,765.7 94.2,765.8 94.6,765.6 95.1,765.9 95.5,766.2 96.0,765.8 96.4,765.4 96.8,765.9 97.3,766.0 97.7,766.0 98.2,766.0 98.6,765.8 99.1,766.0 99.5,765.5 99.9,765.8 100.4,765.7 100.8,765.5 101.3,765.5 101.7,765.8 102.2,765.7 102.6,765.6 103.1,765.8 103.5,766.1 103.9,765.6 104.4,765.6 104.8,765.7 105.3,765.9 105.7,765.8 106.2,765.9 106.6,765.8 107.0,765.5 107.5,765.4 107.9,765.6 108.4,765.6 108.8,765.6 109.3,765.7 109.7,765.7 110.2,765.8 110.6,765.7 111.0,765.2 111.5,765.5 111.9,765.8 112.4,765.8 112.8,765.9 113.3,765.6 113.7,765.6 114.1,766.0 114.6,765.6 115.0,765.8 115.5,765.4 115.9,765.6 116.4,765.3 116.8,761.3 117.2,761.3 117.7,761.2 118.1,761.0 118.6,761.1 119.0,761.4 119.5,761.1 119.9,761.1 120.4,761.2 120.8,761.3 121.2,760.8 121.7,761.2 122.1,761.3 122.6,760.9 123.0,761.0 123.5,761.1 123.9,760.9 124.3,760.9 124.8,760.9 125.2,760.8 125.7,760.9 126.1,761.1 126.6,761.0 127.0,761.1 127.5,760.9 127.9,761.1 128.3,761.3 128.8,760.9 129.2,761.2 129.7,761.3 130.1,760.8 130.6,761.0 131.0,760.7 131.4,760.9 131.9,761.0 132.3,761.0 132.8,760.9 133.2,760.8 133.7,760.9 134.1,760.8 134.6,761.0 135.0,760.7 135.4,761.1 135.9,760.7 136.3,760.5 136.8,760.4 137.2,760.3 137.7,761.0 138.1,760.5 138.5,760.4 139.0,760.4 139.4,760.8 139.9,760.5 140.3,760.2 140.8,760.9 141.2,760.5 141.7,760.4 142.1,760.7 142.5,760.5 143.0,760.8 143.4,760.7 143.9,760.7 144.3,760.5 144.8,760.6 145.2,760.4 145.6,760.7 146.1,760.6 146.5,760.4 147.0,760.4 147.4,760.8 147.9,760.4 148.3,760.6 148.8,760.5 149.2,760.5 149.6,760.3 150.1,760.5 150.5,760.9 151.0,760.8 151.4,760.4 151.9,760.6 152.3,760.3 152.7,760.4 153.2,760.6 153.6,760.3 154.1,760.7 154.5,760.9 155.0,760.1 155.4,760.9 155.9,760.3 156.3,760.3 156.7,760.4 157.2,760.8 157.6,760.3 158.1,760.7 158.5,760.7 159.0,760.5 159.4,760.3 159.8,760.4 160.3,760.3 160.7,760.5 161.2,762.5 161.6,764.7 162.1,764.5 162.5,764.4 162.9,764.5 163.4,764.4 163.8,764.6 164.3,764.6 164.7,764.5 165.2,764.5 165.6,764.4 166.1,764.5 166.5,764.2 166.9,764.6 167.4,764.6 167.8,764.7 168.3,764.5 168.7,764.4 169.2,764.7 169.6,764.5 170.0,764.4 170.5,764.6 170.9,764.7 171.4,764.4 171.8,764.5 172.3,764.5 172.7,764.3 173.2,764.3 173.6,764.6 174.0,764.7 174.5,764.5 174.9,764.6 175.4,765.0 175.8,764.3 176.3,764.6 176.7,764.5 177.1,764.8 177.6,764.4 178.0,764.7 178.5,764.6 178.9,764.9 179.4,764.7 179.8,764.7 180.3,764.7 180.7,764.5 181.1,764.6 181.6,764.5 182.0,764.7 182.5,764.9 182.9,764.7 183.4,764.5 183.8,764.4 184.2,764.5 184.7,765.0 185.1,764.6 185.6,764.4 186.0,764.7 186.5,764.8 186.9,764.6 187.4,764.8 187.8,764.6 188.2,764.7 188.7,764.3 189.1,764.5 189.6,764.7 190.0,764.4 190.5,764.3 190.9,764.6 191.3,764.5 191.8,764.8 192.2,764.1 192.7,764.4 193.1,764.7 193.6,764.6 194.0,764.2 194.5,764.0 194.9,764.1 195.3,764.0 195.8,764.2 196.2,764.3 196.7,763.8 197.1,763.8 197.6,763.9 198.0,763.6 198.4,764.0 198.9,763.8 199.3,763.5 199.8,763.3 200.2,763.7 200.7,763.3 201.1,763.7 201.6,763.5 202.0,763.6 202.4,763.8 202.9,763.4 203.3,763.3 203.8,763.5 204.2,763.4 204.7,763.1 205.1,763.6 205.5,763.6 206.0,763.4 206.4,763.5 206.9,763.0 207.3,763.2 207.8,763.4 208.2,763.3 208.6,762.6 209.1,763.2 209.5,763.2 210.0,763.0 210.4,762.9 210.9,763.0 211.3,763.2 211.8,763.2 212.2,762.8 212.6,762.9 213.1,763.2 213.5,762.6 214.0,762.7 214.4,762.9 214.9,762.8 215.3,762.7 215.7,762.9 216.2,763.0 216.6,762.6 217.1,762.9 217.5,762.5 218.0,762.9 218.4,762.6 218.9,762.6 219.3,762.2 219.7,762.7 220.2,762.8 220.6,762.6 221.1,762.6 221.5,762.5 222.0,762.3 222.4,762.2 222.8,762.0 223.3,762.4 223.7,761.7 224.2,761.9 224.6,762.3 225.1,762.7 225.5,762.2 226.0,762.2 226.4,762.6 226.8,762.1 227.3,762.2 227.7,762.3 228.2,762.0 228.6,761.9 229.1,762.2 229.5,762.0 229.9,762.2 230.4,762.2 230.8,762.0 231.3,761.9 231.7,762.1 232.2,762.4 232.6,761.8 233.1,762.3 233.5,761.9 233.9,761.5 234.4,761.9 234.8,762.1 235.3,762.1 235.7,761.6 236.2,761.8 236.6,761.7 237.0,761.6 237.5,761.8 237.9,761.8 238.4,761.9 238.8,762.3 239.3,762.0 239.7,761.7 240.2,761.7 240.6,761.6 241.0,761.7 241.5,761.6 241.9,761.5 242.4,761.8 242.8,761.6 243.3,761.9 243.7,761.4 244.1,761.5 244.6,761.4 245.0,761.2 245.5,761.3 245.9,761.5 246.4,761.3 246.8,761.7 247.3,761.3 247.7,761.4 248.1,761.7 248.6,761.1 249.0,761.5 249.5,761.2 249.9,761.4 250.4,761.1 250.8,761.0 251.2,761.4 251.7,761.6 252.1,761.3 252.6,761.1 253.0,761.3 253.5,761.3 253.9,761.1 254.3,761.7 254.8,761.3 255.2,761.4 255.7,761.1 256.1,761.2 256.6,761.3 257.0,761.1 257.5,761.3 257.9,761.0 258.3,761.2 258.8,761.1 259.2,761.1 259.7,760.8 260.1,761.0 260.6,760.8 261.0,760.8 261.4,761.1 261.9,760.8 262.3,760.8 262.8,760.8 263.2,760.9 263.7,760.9 264.1,760.7 264.6,760.4 265.0,760.9 265.4,760.7 265.9,760.8 266.3,760.6 266.8,760.6 267.2,760.5 267.7,761.2 268.1,760.7 268.5,760.7 269.0,760.4 269.4,760.5 269.9,760.4 270.3,760.0 270.8,759.7 271.2,760.6 271.7,760.0 272.1,759.8 272.5,759.8 273.0,759.7 273.4,759.9 273.9,759.7 274.3,759.3 274.8,759.1 275.2,759.2 275.6,759.3 276.1,759.1 276.5,759.0 277.0,758.8 277.4,758.8 277.9,758.8 278.3,758.5 278.8,758.7 279.2,758.2 279.6,758.0 280.1,758.4 280.5,757.9 281.0,758.1 281.4,757.6 281.9,757.5 282.3,757.6 282.7,757.3 283.2,757.4 283.6,757.4 284.1,757.3 284.5,757.1 285.0,757.0 285.4,756.8 285.9,756.8 286.3,756.4 286.7,756.3 287.2,756.5 287.6,756.6 288.1,756.0 288.5,755.8 289.0,756.0 289.4,756.1 289.8,755.7 290.3,755.3 290.7,755.9 291.2,755.3 291.6,755.4 292.1,755.4 292.5,755.0 293.0,755.2 293.4,754.8 293.8,754.5 294.3,754.6 294.7,754.6 295.2,754.6 295.6,754.3 296.1,754.2 296.5,753.3 296.9,753.5 297.4,753.5 297.8,753.3 298.3,753.1 298.7,752.7 299.2,752.7 299.6,751.9 300.0,752.2 300.5,752.0 300.9,751.6 301.4,751.2 301.8,751.0 302.3,751.1 302.7,750.8 303.2,750.6 303.6,750.3 304.0,750.2 304.5,750.2 304.9,750.1 305.4,749.6 305.8,749.7 306.3,749.0 306.7,749.0 307.1,749.1 307.6,748.7 308.0,748.5 308.5,748.3 308.9,747.9 309.4,748.1 309.8,748.0 310.3,747.4 310.7,747.3 311.1,747.0 311.6,746.8 312.0,746.7 312.5,746.3 312.9,746.4 313.4,746.0 313.8,746.0 314.2,745.9 314.7,745.3 315.1,745.1 315.6,745.5 316.0,745.1 316.5,744.6 316.9,744.3 317.4,744.4 317.8,744.1 318.2,744.2 318.7,743.2 319.1,743.4 319.6,743.1 320.0,743.0 320.5,742.7 320.9,742.6 321.3,742.6 321.8,742.1 322.2,742.1 322.7,741.6 323.1,741.8 323.6,741.6 324.0,741.2 324.5,740.8 324.9,740.9 325.3,740.8 325.8,740.5 326.2,740.4 326.7,739.7 327.1,739.7 327.6,739.5 328.0,739.5 328.4,739.4 328.9,738.9 329.3,738.5 329.8,738.3 330.2,738.1 330.7,737.6 331.1,737.5 331.6,737.0 332.0,737.0 332.4,736.7 332.9,736.0 333.3,735.8 333.8,735.1 334.2,735.2 334.7,734.8 335.1,734.7 335.5,734.6 336.0,734.2 336.4,733.4 336.9,733.4 337.3,732.6 337.8,732.2 338.2,732.3 338.7,731.5 339.1,731.5 339.5,731.0 340.0,730.9 340.4,730.4 340.9,730.4 341.3,729.8 341.8,729.6 342.2,729.3 342.6,728.8 343.1,728.5 343.5,728.3 344.0,727.8 344.4,727.4 344.9,727.5 345.3,726.8 345.7,726.5 346.2,726.4 346.6,725.9 347.1,725.7 347.5,724.7 348.0,724.5 348.4,724.0 348.9,723.2 349.3,723.0 349.7,722.4 350.2,722.2 350.6,721.6 351.1,721.3 351.5,720.6 352.0,719.8 352.4,719.5 352.8,718.9 353.3,718.8 353.7,718.2 354.2,717.7 354.6,717.0 355.1,716.5 355.5,715.8 356.0,714.8 356.4,714.1 356.8,713.3 357.3,712.2 357.7,711.7 358.2,710.7 358.6,709.6 359.1,709.1 359.5,708.1 359.9,707.6 360.4,706.2 360.8,706.2 361.3,705.2 361.7,704.3 362.2,703.0 362.6,702.4 363.1,701.7 363.5,701.0 363.9,699.9 364.4,699.4 364.8,699.0 365.3,698.6 365.7,698.0 366.2,697.2 366.6,696.6 367.0,696.1 367.5,695.6 367.9,695.3 368.4,694.4 368.8,694.1 369.3,693.3 369.7,692.7 370.2,692.4 370.6,691.9 371.0,690.9 371.5,690.5 371.9,690.2 372.4,690.1 372.8,688.7 373.3,687.8 373.7,686.9 374.1,686.5 374.6,685.7 375.0,684.9 375.5,683.9 375.9,683.5 376.4,682.5 376.8,681.9 377.3,680.9 377.7,680.5 378.1,679.3 378.6,678.7 379.0,677.9 379.5,677.0 379.9,676.1 380.4,675.9 380.8,674.5 381.2,673.9 381.7,673.4 382.1,672.5 382.6,672.1 383.0,671.3 383.5,671.1 383.9,670.6 384.4,669.6 384.8,668.8 385.2,668.5 385.7,667.9 386.1,667.5 386.6,667.1 387.0,666.3 387.5,665.4 387.9,665.4 388.3,664.6 388.8,664.3 389.2,663.3 389.7,662.5 390.1,662.6 390.6,662.0 391.0,661.3 391.5,661.2 391.9,661.0 392.3,660.6 392.8,660.4 393.2,659.4 393.7,659.4 394.1,658.6 394.6,658.3 395.0,658.2 395.4,657.8 395.9,657.1 396.3,656.9 396.8,656.5 397.2,656.9 397.7,656.4 398.1,656.8 398.5,657.2 399.0,656.9 399.4,656.8 399.9,656.5 400.3,657.0 400.8,657.3 401.2,656.6 401.7,657.1 402.1,657.2 402.5,657.4 403.0,657.5 403.4,657.0 403.9,657.4 404.3,657.2 404.8,656.9 405.2,656.1 405.6,656.3 406.1,655.7 406.5,655.5 407.0,655.1 407.4,655.1 407.9,654.4 408.3,653.9 408.8,654.0 409.2,653.8 409.6,653.6 410.1,653.0 410.5,652.7 411.0,652.4 411.4,652.1 411.9,652.0 412.3,651.3 412.7,651.2 413.2,651.1 413.6,650.9 414.1,650.5 414.5,650.5 415.0,650.6 415.4,650.0 415.9,650.1 416.3,650.0 416.7,650.0 417.2,649.5 417.6,649.5 418.1,649.3 418.5,648.9 419.0,648.8 419.4,648.4 419.8,648.5 420.3,648.6 420.7,648.5 421.2,648.5 421.6,648.2 422.1,648.3 422.5,648.4 423.0,648.1 423.4,648.2 423.8,648.2 424.3,648.4 424.7,647.9 425.2,647.9 425.6,647.9 426.1,648.0 426.5,648.0 426.9,647.8 427.4,647.7 427.8,647.7 428.3,647.7 428.7,647.7 429.2,647.5 429.6,647.4 430.1,647.6 430.5,647.2 430.9,647.2 431.4,647.1 431.8,647.3 432.3,647.2 432.7,647.4 433.2,646.9 433.6,647.5 434.0,647.1 434.5,647.0 434.9,646.6 435.4,646.6 435.8,646.6 436.3,646.5 436.7,646.2 437.2,645.9 437.6,645.7 438.0,645.6 438.5,645.5 438.9,645.2 439.4,644.8 439.8,645.0 440.3,644.6 440.7,644.1 441.1,644.2 441.6,644.2 442.0,643.8 442.5,643.9 442.9,643.6 443.4,643.1 443.8,642.9 444.2,643.6 444.7,643.0 445.1,642.6 445.6,643.1 446.0,642.8 446.5,642.5 446.9,642.8 447.4,642.5 447.8,642.5 448.2,642.8 448.7,642.3 449.1,642.3 449.6,642.0 450.0,641.6 450.5,641.8 450.9,642.0 451.3,641.7 451.8,641.7 452.2,641.4 452.7,641.8 453.1,641.7 453.6,641.8 454.0,641.1 454.5,641.2 454.9,641.2 455.3,641.1 455.8,641.0 456.2,641.0 456.7,640.8 457.1,640.7 457.6,640.3 458.0,640.4 458.4,640.5 458.9,640.4 459.3,640.0 459.8,640.0 460.2,640.0 460.7,639.8 461.1,639.5 461.6,640.0 462.0,639.9 462.4,640.0 462.9,639.5 463.3,639.6 463.8,639.6 464.2,639.5 464.7,639.2 465.1,639.3 465.5,639.3 466.0,638.9 466.4,639.3 466.9,639.2 467.3,638.4 467.8,638.9 468.2,638.9 468.7,638.9 469.1,638.7 469.5,638.4 470.0,638.4 470.4,638.3 470.9,638.4 471.3,638.6 471.8,638.2 472.2,637.9 472.6,637.9 473.1,638.1 473.5,637.8 474.0,638.0 474.4,637.8 474.9,638.0 475.3,637.7 475.8,637.6 476.2,637.6 476.6,637.3 477.1,637.0 477.5,637.1 478.0,637.3 478.4,637.4 478.9,637.3 479.3,637.3 479.7,637.0 480.2,636.9 480.6,636.8 481.1,636.8 481.5,636.7 482.0,636.7 482.4,636.7 482.9,636.2 483.3,636.2 483.7,636.6 484.2,636.5 484.6,636.4 485.1,636.2 485.5,635.9 486.0,635.8 486.4,635.8 486.8,635.7 487.3,635.6 487.7,635.6 488.2,635.6 488.6,635.6 489.1,635.9 489.5,635.5 489.9,635.0 490.4,635.4 490.8,635.4 491.3,635.0 491.7,635.1 492.2,635.1 492.6,634.6 493.1,634.7 493.5,634.6 493.9,634.8 494.4,634.6 494.8,634.5 495.3,634.3 495.7,634.2 496.2,634.1 496.6,634.2 497.0,634.1 497.5,634.4 497.9,633.9 498.4,633.8 498.8,634.0 499.3,634.0 499.7,633.8 500.2,633.9 500.6,633.5 501.0,633.5 501.5,633.7 501.9,633.4 502.4,633.1 502.8,633.0 503.3,633.0 503.7,633.1 504.1,633.1 504.6,633.0 505.0,632.8 505.5,632.3 505.9,632.5 506.4,632.4 506.8,632.3 507.3,632.9 507.7,632.5 508.1,632.5 508.6,632.1 509.0,631.9 509.5,632.3 509.9,632.1 510.4,632.0 510.8,632.1 511.2,632.1 511.7,632.0 512.1,631.6 512.6,631.9 513.0,631.4 513.5,631.6 513.9,631.4 514.4,631.1 514.8,631.5 515.2,631.5 515.7,631.2 516.1,631.4 516.6,631.3 517.0,631.1 517.5,630.9 517.9,631.2 518.3,630.9 518.8,630.7 519.2,630.4 519.7,631.0 520.1,630.3 520.6,630.3 521.0,630.6 521.5,630.7 521.9,630.2 522.3,630.3 522.8,630.2 523.2,630.0 523.7,630.1 524.1,630.0 524.6,629.9 525.0,629.7 525.4,629.5 525.9,629.4 526.3,629.7 526.8,629.7 527.2,629.1 527.7,629.4 528.1,629.4 528.6,629.7 529.0,629.2 529.4,629.5 529.9,629.4 530.3,629.5 530.8,629.3 531.2,629.1 531.7,629.3 532.1,629.2 532.5,628.9 533.0,629.1 533.4,629.1 533.9,628.9 534.3,629.0 534.8,628.5 535.2,628.8 535.6,628.4 536.1,628.3 536.5,628.6 537.0,628.3 537.4,628.4 537.9,628.5 538.3,628.2 538.8,628.2 539.2,627.9 539.6,627.8 540.1,628.2 540.5,628.0 541.0,627.7 541.4,627.5 541.9,628.2 542.3,627.4 542.7,627.7 543.2,627.3 543.6,627.6 544.1,627.6 544.5,627.4 545.0,627.1 545.4,627.3 545.9,627.7 546.3,627.0 546.7,627.5 547.2,627.3 547.6,627.3 548.1,627.3 548.5,627.2 549.0,627.1 549.4,626.9 549.8,626.8 550.3,626.8 550.7,626.9 551.2,626.6 551.6,626.3 552.1,626.3 552.5,626.4 553.0,626.5 553.4,626.6 553.8,626.7 554.3,626.9 554.7,627.5 555.2,627.7 555.6,627.5 556.1,627.7 556.5,627.9 556.9,628.9 557.4,628.6 557.8,629.4 558.3,628.8 558.7,629.2 559.2,629.4 559.6,629.6 560.1,629.3 560.5,629.6 560.9,629.3 561.4,629.3 561.8,629.3 562.3,629.3 562.7,629.3 563.2,629.6 563.6,629.2 564.0,629.1 564.5,629.3 564.9,629.1 565.4,629.0 565.8,629.4 566.3,629.2 566.7,629.2 567.2,629.3 567.6,629.0 568.0,629.2 568.5,629.1 568.9,628.9 569.4,628.9 569.8,628.9 570.3,628.4 570.7,629.0 571.1,628.8 571.6,629.1 572.0,628.7 572.5,628.5 572.9,628.5 573.4,628.8 573.8,628.7 574.3,628.4 574.7,628.6 575.1,628.4 575.6,628.7 576.0,628.2 576.5,628.3 576.9,628.4 577.4,628.6 577.8,628.4 578.2,628.3 578.7,628.3 579.1,628.3 579.6,628.3 580.0,628.2 580.5,627.9 580.9,628.6 581.3,628.4 581.8,628.4 582.2,628.2 582.7,628.6 583.1,628.3 583.6,628.6 584.0,628.8 584.5,629.1 584.9,629.0 585.3,629.2 585.8,629.3 586.2,629.7 586.7,629.6 587.1,630.2 587.6,629.8 588.0,630.8 588.4,630.5 588.9,630.8 589.3,630.5 589.8,631.1 590.2,630.6 590.7,631.5 591.1,630.9 591.6,631.3 592.0,631.4 592.4,631.4 592.9,631.1 593.3,631.4 593.8,632.1 594.2,631.5 594.7,631.7 595.1,632.1 595.5,631.7 596.0,632.2 596.4,631.9 596.9,632.0 597.3,632.2 597.8,632.0 598.2,632.1 598.7,631.7 599.1,631.6 599.5,631.4 600.0,630.7 600.4,630.9 600.9,630.9 601.3,630.5 601.8,630.5 602.2,630.1 602.6,629.9 603.1,629.7 603.5,629.7 604.0,629.8 604.4,629.6 604.9,629.4 605.3,629.7 605.8,629.6 606.2,629.6 606.6,629.3 607.1,629.3 607.5,629.7 608.0,629.5 608.4,629.8 608.9,629.6 609.3,629.4 609.7,629.3 610.2,629.2 610.6,629.4 611.1,629.6 611.5,629.2 612.0,629.3 612.4,629.2 612.9,629.2 613.3,629.1 613.7,629.1 614.2,629.0 614.6,629.3 615.1,628.9 615.5,629.2 616.0,629.1 616.4,628.7 616.8,629.0 617.3,629.3 617.7,628.7 618.2,628.8 618.6,628.7 619.1,628.9 619.5,628.9 620.0,629.0 620.4,629.0 620.8,628.6 621.3,629.0 621.7,629.0 622.2,629.0 622.6,628.5 623.1,628.7 623.5,628.9 623.9,628.9 624.4,628.7 624.8,628.7 625.3,629.1 625.7,628.6 626.2,628.9 626.6,628.9 627.0,628.9 627.5,628.6 627.9,628.4 628.4,628.7 628.8,628.6 629.3,628.9 629.7,628.4 630.2,628.0 630.6,628.2 631.0,627.8 631.5,627.2 631.9,627.5 632.4,626.9 632.8,626.4 633.3,626.6 633.7,626.1 634.1,625.7 634.6,625.3 635.0,625.5 635.5,624.7 635.9,624.6 636.4,624.4 636.8,624.3 637.3,624.5 637.7,624.4 638.1,624.8 638.6,624.7 639.0,624.6 639.5,624.4 639.9,624.1 640.4,624.6 640.8,624.3 641.2,624.4 641.7,624.4 642.1,623.8 642.6,624.0 643.0,623.7 643.5,623.7 643.9,624.1 644.4,624.3 644.8,623.4 645.2,623.9 645.7,624.0 646.1,623.6 646.6,623.7 647.0,623.8 647.5,623.7 647.9,623.5 648.3,623.5 648.8,623.3 649.2,623.5 649.7,623.5 650.1,623.2 650.6,623.3 651.0,623.1 651.5,623.3 651.9,623.2 652.3,623.4 652.8,622.8 653.2,623.4 653.7,623.0 654.1,623.2 654.6,623.0 655.0,622.9 655.4,623.4 655.9,623.1 656.3,623.4 656.8,622.8 657.2,623.1 657.7,623.4 658.1,623.2 658.6,622.8 659.0,622.7 659.4,622.8 659.9,623.2 660.3,623.1 660.8,622.7 661.2,623.2 661.7,623.1 662.1,623.2 662.5,623.3 663.0,622.8 663.4,622.9 663.9,623.0 664.3,622.9 664.8,622.8 665.2,622.7 665.7,623.0 666.1,623.0 666.5,623.0 667.0,622.5 667.4,622.8 667.9,622.9 668.3,622.6 668.8,622.4 669.2,622.2 669.6,622.1 670.1,622.3 670.5,622.3 671.0,622.1 671.4,622.2 671.9,621.9 672.3,621.7 672.7,621.7 673.2,622.0 673.6,621.8 674.1,621.2 674.5,621.6 675.0,621.2 675.4,621.2 675.9,621.4 676.3,621.5 676.7,621.2 677.2,621.5 677.6,621.3 678.1,621.2 678.5,621.4 679.0,621.3 679.4,621.3 679.8,621.4 680.3,621.2 680.7,621.3 681.2,621.5 681.6,621.2 682.1,621.2 682.5,621.2 683.0,621.5 683.4,620.9 683.8,620.9 684.3,620.9 684.7,620.9 685.2,621.2 685.6,621.0 686.1,621.2 686.5,620.5 686.9,621.0 687.4,620.8 687.8,621.2 688.3,621.1 688.7,621.0 689.2,620.7 689.6,620.7 690.1,620.8 690.5,621.2 690.9,620.6 691.4,621.0 691.8,620.4 692.3,620.4 692.7,620.6 693.2,620.5 693.6,621.0 694.0,620.2 694.5,620.6 694.9,620.5 695.4,620.8 695.8,620.6 696.3,620.8 696.7,620.6 697.2,620.6 697.6,620.5 698.0,620.3 698.5,620.4 698.9,620.4 699.4,620.4 699.8,620.0 700.3,620.4 700.7,620.0 701.1,620.6 701.6,620.4 702.0,620.1 702.5,620.1 702.9,619.5 703.4,619.5 703.8,620.3 704.3,620.2 704.7,619.9 705.1,619.5 705.6,619.6 706.0,619.7 706.5,620.0 706.9,619.8 707.4,620.2 707.8,619.9 708.2,619.5 708.7,619.3 709.1,619.7 709.6,619.4 710.0,619.0 710.5,619.3 710.9,619.3 711.4,619.1 711.8,619.1 712.2,619.1 712.7,619.2 713.1,619.2 713.6,619.0 714.0,619.1 714.5,618.7 714.9,618.7 715.3,618.6 715.8,618.3 716.2,618.4 716.7,618.3 717.1,618.5 717.6,618.5 718.0,617.9 718.4,618.5 718.9,618.4 719.3,618.4 719.8,618.1 720.2,618.0 720.7,617.8 721.1,618.0 721.6,618.2 722.0,617.7 722.4,617.5 722.9,617.7 723.3,617.6 723.8,617.4 724.2,617.2 724.7,617.4 725.1,617.6 725.5,617.4 726.0,617.2 726.4,617.5 726.9,616.9 727.3,617.1 727.8,616.8 728.2,616.8 728.7,616.8 729.1,616.4 729.5,616.8 730.0,616.7 730.4,616.5 730.9,616.3 731.3,616.4 731.8,616.6 732.2,616.2 732.6,616.2 733.1,615.9 733.5,616.4 734.0,616.2 734.4,616.4 734.9,616.5 735.3,616.2 735.8,616.0 736.2,616.4 736.6,616.3 737.1,616.4 737.5,615.8 738.0,616.2 738.4,616.0 738.9,616.2 739.3,616.0 739.7,616.1 740.2,616.5 740.6,615.9 741.1,615.8 741.5,616.3 742.0,615.9 742.4,616.0 742.9,616.1 743.3,615.9 743.7,616.2 744.2,615.7 744.6,615.5 745.1,616.0 745.5,615.7 746.0,615.4 746.4,615.6 746.8,615.8 747.3,615.8 747.7,615.6 748.2,615.6 748.6,615.4 749.1,615.8 749.5,615.3 750.0,615.6 750.4,615.3 750.8,615.6 751.3,615.7 751.7,615.5 752.2,615.6 752.6,615.4 753.1,615.2 753.5,615.1 753.9,615.3 754.4,615.4 754.8,615.3 755.3,615.1 755.7,615.0 756.2,615.3 756.6,615.2 757.1,615.3 757.5,615.1 757.9,614.9 758.4,615.7 758.8,615.0 759.3,615.1 759.7,615.5 760.2,614.9 760.6,615.0 761.0,614.9 761.5,615.2 761.9,614.5 762.4,614.9 762.8,614.9 763.3,614.5 763.7,614.7 764.1,614.6 764.6,614.5 765.0,615.1 765.5,614.4 765.9,614.7 766.4,614.6 766.8,614.4 767.3,614.7 767.7,614.5 768.1,614.4 768.6,614.5 769.0,614.4 769.5,614.8 769.9,614.7 770.4,614.6 770.8,614.3 771.2,613.6 771.7,614.2 772.1,614.3 772.6,614.3 773.0,614.0 773.5,614.0 773.9,614.4 774.4,613.9 774.8,614.1 775.2,613.9 775.7,614.4 776.1,614.3 776.6,613.9 777.0,614.3 777.5,613.9 777.9,613.8 778.3,613.8 778.8,613.8 779.2,613.8 779.7,613.7 780.1,613.8 780.6,613.7 781.0,613.1 781.5,613.4 781.9,613.5 782.3,613.5 782.8,613.7 783.2,613.5 783.7,613.6 784.1,613.3 784.6,613.7 785.0,613.9 785.4,613.5 785.9,613.3 786.3,612.9 786.8,613.1 787.2,613.5 787.7,613.3 788.1,613.4 788.6,613.3 789.0,613.4 789.4,613.5 789.9,613.1 790.3,613.1 790.8,613.1 791.2,613.0 791.7,612.6 792.1,613.0 792.5,613.0 793.0,612.8 793.4,613.2 793.9,612.7 794.3,613.0 794.8,613.0 795.2,612.8 795.7,612.4 796.1,612.9 796.5,612.5 797.0,612.6 797.4,612.9 797.9,612.4 798.3,612.7 798.8,612.8 799.2,612.6 799.6,612.6 800.1,612.3 800.5,612.5 801.0,612.0 801.4,612.2 801.9,612.4 802.3,612.4 802.8,612.1 803.2,612.5 803.6,612.5 804.1,612.2 804.5,611.9 805.0,611.9 805.4,611.9 805.9,612.0 806.3,612.3 806.7,611.9 807.2,612.2 807.6,611.6 808.1,611.7 808.5,611.7 809.0,611.6 809.4,611.5 809.8,611.5 810.3,611.5 810.7,611.6 811.2,611.7 811.6,611.3 812.1,611.1 812.5,611.1 813.0,611.3 813.4,611.1 813.8,611.3 814.3,611.1 814.7,611.3 815.2,611.1 815.6,610.7 816.1,610.9 816.5,610.7 816.9,611.1 817.4,611.1 817.8,610.9 818.3,610.7 818.7,610.9 819.2,610.6 819.6,610.8 820.1,610.5 820.5,610.6 820.9,611.0 821.4,610.7 821.8,610.9 822.3,610.7 822.7,611.0 823.2,610.8 823.6,610.8 824.0,611.5 824.5,611.4 824.9,611.0 825.4,611.0 825.8,610.8 826.3,611.0 826.7,611.3 827.2,611.0 827.6,611.3 828.0,611.2 828.5,611.3 828.9,611.1 829.4,611.5 829.8,611.5 830.3,611.7 830.7,610.9 831.1,611.5 831.6,611.5 832.0,611.6 832.5,611.5 832.9,611.4 833.4,611.2 833.8,611.3 834.3,611.2 834.7,611.4 835.1,611.3 835.6,611.0 836.0,611.2 836.5,611.1 836.9,611.6 837.4,611.0 837.8,611.1 838.2,610.8 838.7,611.6 839.1,611.0 839.6,611.1 840.0,611.0 840.5,611.1 840.9,610.9 841.4,610.8 841.8,610.9 842.2,611.0 842.7,610.9 843.1,610.9 843.6,610.8 844.0,611.0 844.5,611.2 844.9,610.5 845.3,611.1 845.8,610.8 846.2,611.0 846.7,610.7 847.1,610.9 847.6,610.7 848.0,610.8 848.5,610.9 848.9,610.5 849.3,610.3 849.8,610.5 850.2,610.5 850.7,610.7 851.1,610.5 851.6,610.4 852.0,610.6 852.4,610.2 852.9,610.4 853.3,610.3 853.8,610.4 854.2,610.4 854.7,610.3 855.1,610.2 855.5,610.2 856.0,610.4 856.4,610.4 856.9,610.2 857.3,610.5 857.8,609.9 858.2,610.1 858.7,610.1 859.1,610.2 859.5,609.9 860.0,610.1 860.4,609.6 860.9,609.9 861.3,610.3 861.8,609.8 862.2,610.0 862.6,610.0 863.1,609.9 863.5,609.9 864.0,609.8 864.4,609.7 864.9,609.7 865.3,609.9 865.8,610.0 866.2,609.9 866.6,609.6 867.1,609.5 867.5,609.3 868.0,609.9 868.4,609.6 868.9,609.6 869.3,609.6 869.7,609.5 870.2,609.6 870.6,609.6 871.1,609.6 871.5,609.4 872.0,609.2 872.4,609.1 872.9,609.5 873.3,609.6 873.7,609.4 874.2,609.5 874.6,609.1 875.1,609.4 875.5,609.2 876.0,609.5 876.4,609.3 876.8,609.1 877.3,608.9 877.7,609.3 878.2,609.0 878.6,609.5 879.1,609.3 879.5,609.2 880.0,609.1 880.4,608.9 880.8,608.9 881.3,609.3 881.7,608.8 882.2,609.1 882.6,608.5 883.1,608.8 883.5,608.8 883.9,608.9 884.4,608.8 884.8,608.8 885.3,608.9 885.7,608.6 886.2,608.7 886.6,608.5 887.1,608.7 887.5,608.5 887.9,608.8 888.4,607.9 888.8,608.7 889.3,608.6 889.7,608.2 890.2,608.1 890.6,608.5 891.0,608.6 891.5,608.4 891.9,608.3 892.4,608.2 892.8,608.0 893.3,607.7 893.7,607.6 894.2,607.9 894.6,607.6 895.0,607.4 895.5,607.3 895.9,607.5 896.4,607.6 896.8,607.2 897.3,607.0 897.7,607.3 898.1,606.8 898.6,606.7 899.0,607.1 899.5,607.3 899.9,607.0 900.4,606.9 900.8,606.6 901.2,607.0 901.7,606.1 902.1,606.1 902.6,606.6 903.0,606.8 903.5,606.4 903.9,606.2 904.4,606.0 904.8,606.1 905.2,606.2 905.7,606.6 906.1,606.0 906.6,605.9 907.0,606.1 907.5,606.0 907.9,605.9 908.3,606.0 908.8,606.1 909.2,605.8 909.7,606.1 910.1,605.5 910.6,605.9 911.0,605.6 911.5,605.8 911.9,605.5 912.3,605.6 912.8,605.4 913.2,605.7 913.7,605.8 914.1,605.5 914.6,605.5 915.0,605.7 915.4,605.5 915.9,605.6 916.3,605.2 916.8,605.3 917.2,605.2 917.7,604.6 918.1,605.0 918.6,605.0 919.0,604.9 919.4,605.0 919.9,605.0 920.3,604.7 920.8,604.6 921.2,605.4 921.7,604.8 922.1,604.8 922.5,604.8 923.0,604.4 923.4,604.7 923.9,604.4 924.3,604.6 924.8,604.6 925.2,604.3 925.7,604.6 926.1,604.4 926.5,604.6 927.0,604.5 927.4,604.1 927.9,604.1 928.3,604.4 928.8,604.4 929.2,603.6 929.6,604.2 930.1,604.2 930.5,603.9 931.0,604.1 931.4,604.0 931.9,602.4 932.3,601.0 932.8,599.9 933.2,598.3 933.6,597.2 934.1,595.9 934.5,595.8 935.0,595.8 935.4,595.5 935.9,595.5 936.3,595.6 936.7,595.4 937.2,595.4 937.6,595.4 938.1,595.2 938.5,594.9 939.0,595.0 939.4,594.7 939.9,594.6 940.3,594.8 940.7,594.8 941.2,594.8 941.6,594.5 942.1,594.3 942.5,594.1 943.0,592.6 943.4,590.0 943.8,587.9 944.3,585.5 944.7,583.8 945.2,583.1 945.6,582.6 946.1,581.6 946.5,580.9 946.9,580.1 947.4,579.2 947.8,578.6 948.3,577.5 948.7,576.9 949.2,576.3 949.6,575.9 950.1,575.2 950.5,574.7 950.9,574.7 951.4,573.9 951.8,573.6 952.3,573.0 952.7,572.3 953.2,571.8 953.6,569.1 954.0,566.6 954.5,564.5 954.9,562.2 955.4,559.8 955.8,558.1 956.3,556.3 956.7,554.8 957.2,552.9 957.6,551.3 958.0,549.4 958.5,547.6 958.9,545.9 959.4,544.6 959.8,543.1 960.3,541.9 960.7,540.3 961.1,539.2 961.6,538.0 962.0,536.4 962.5,535.2 962.9,533.6 963.4,532.0 963.8,530.5 964.3,528.4 964.7,526.9 965.1,524.6 965.6,522.8 966.0,520.9 966.5,521.0 966.9,520.3 967.4,520.9 967.8,520.7 968.2,520.4 968.7,520.3 969.1,520.2 969.6,520.2 970.0,520.3 970.5,519.9 970.9,520.0 971.4,520.3 971.8,519.6 972.2,519.9 972.7,518.3 973.1,517.4 973.6,516.0 974.0,514.4 974.5,513.1 974.9,511.4 975.3,510.5 975.8,508.8 976.2,507.7 976.7,505.4 977.1,503.4 977.6,501.6 978.0,499.1 978.5,497.5 978.9,495.3 979.3,493.8 979.8,491.6 980.2,489.6 980.7,487.6 981.1,485.7 981.6,483.8 982.0,482.2" stroke="#0072bd" stroke-width="1" marker-start="url(#ma)" marker-mid="url(#ma)" marker-end="url(#ma)"/>
<polyline points="68.4,763.9 68.9,764.0 69.3,763.8 69.8,763.9 70.2,763.7 70.7,764.0 71.1,763.9 71.5,764.0 72.0,764.0 72.4,764.0 72.9,764.1 73.3,764.1 73.8,764.0 74.2,763.8 74.7,763.9 75.1,763.8 75.5,764.2 76.0,764.0 76.4,764.0 76.9,764.0 77.3,764.2 77.8,764.3 78.2,764.3 78.6,764.1 79.1,763.7 79.5,764.0 80.0,764.2 80.4,764.0 80.9,764.0 81.3,764.0 81.8,764.0 82.2,764.2 82.6,764.1 83.1,763.9 83.5,763.9 84.0,763.8 84.4,764.1 84.9,763.8 85.3,764.0 85.7,763.9 86.2,763.8 86.6,764.0 87.1,763.9 87.5,763.9 88.0,763.9 88.4,763.8 88.9,763.8 89.3,763.9 89.7,764.0 90.2,763.6 90.6,763.9 91.1,763.9 91.5,764.0 92.0,764.2 92.4,764.0 92.8,763.9 93.3,763.8 93.7,763.9 94.2,763.8 94.6,763.8 95.1,763.8 95.5,763.9 96.0,763.9 96.4,763.9 96.8,764.0 97.3,763.7 97.7,764.1 98.2,763.9 98.6,763.8 99.1,764.2 99.5,763.8 99.9,763.9 100.4,763.8 100.8,763.9 101.3,764.1 101.7,763.8 102.2,763.8 102.6,763.7 103.1,763.8 103.5,764.1 103.9,763.7 104.4,763.7 104.8,763.7 105.3,763.8 105.7,763.9 106.2,763.7 106.6,763.9 107.0,763.4 107.5,763.8 107.9,764.0 108.4,763.8 108.8,763.6 109.3,763.9 109.7,764.2 110.2,763.6 110.6,763.7 111.0,763.9 111.5,763.7 111.9,763.9 112.4,763.9 112.8,763.6 113.3,763.8 113.7,763.7 114.1,763.8 114.6,763.6 115.0,763.7 115.5,764.1 115.9,763.6 116.4,763.8 116.8,763.6 117.2,763.7 117.7,763.5 118.1,763.8 118.6,764.0 119.0,763.8 119.5,763.6 119.9,763.8 120.4,763.8 120.8,763.5 121.2,763.7 121.7,763.5 122.1,763.7 122.6,763.9 123.0,763.8 123.5,763.7 123.9,763.6 124.3,763.8 124.8,763.9 125.2,763.8 125.7,763.7 126.1,763.8 126.6,763.7 127.0,763.3 127.5,763.6 127.9,763.8 128.3,763.6 128.8,763.4 129.2,763.5 129.7,763.6 130.1,763.8 130.6,763.9 131.0,763.7 131.4,763.6 131.9,763.9 132.3,763.8 132.8,763.6 133.2,764.0 133.7,763.9 134.1,763.6 134.6,763.5 135.0,763.5 135.4,763.4 135.9,763.3 136.3,763.4 136.8,763.6 137.2,763.2 137.7,763.3 138.1,763.4 138.5,763.7 139.0,763.5 139.4,763.9 139.9,763.6 140.3,764.0 140.8,763.6 141.2,763.4 141.7,763.5 142.1,763.2 142.5,763.5 143.0,763.5 143.4,763.6 143.9,763.4 144.3,763.5 144.8,763.3 145.2,763.2 145.6,763.4 146.1,763.7 146.5,763.4 147.0,763.2 147.4,763.4 147.9,763.4 148.3,763.3 148.8,763.2 149.2,763.9 149.6,763.2 150.1,763.3 150.5,763.4 151.0,763.5 151.4,763.4 151.9,763.3 152.3,763.7 152.7,763.3 153.2,763.4 153.6,763.2 154.1,763.3 154.5,763.4 155.0,763.4 155.4,763.3 155.9,763.4 156.3,763.3 156.7,763.5 157.2,763.6 157.6,763.5 158.1,763.6 158.5,763.5 159.0,763.3 159.4,763.7 159.8,763.6 160.3,763.2 160.7,763.5 161.2,763.4 161.6,763.6 162.1,763.5 162.5,763.4 162.9,763.0 163.4,763.2 163.8,763.6 164.3,763.2 164.7,763.1 165.2,763.2 165.6,763.5 166.1,763.3 166.5,762.9 166.9,763.5 167.4,763.2 167.8,763.4 168.3,763.5 168.7,763.4 169.2,763.1 169.6,763.1 170.0,763.4 170.5,763.4 170.9,763.4 171.4,763.7 171.8,763.1 172.3,762.9 172.7,763.0 173.2,763.3 173.6,763.0 174.0,763.0 174.5,763.3 174.9,763.2 175.4,763.3 175.8,763.2 176.3,762.9 176.7,763.4 177.1,763.4 177.6,763.0 178.0,763.2 178.5,763.6 178.9,763.4 179.4,763.3 179.8,763.3 180.3,763.1 180.7,763.0 181.1,763.2 181.6,763.1 182.0,763.3 182.5,762.9 182.9,762.9 183.4,763.2 183.8,763.3 184.2,762.7 184.7,762.9 185.1,763.3 185.6,763.5 186.0,763.2 186.5,762.9 186.9,763.2 187.4,763.2 187.8,763.2 188.2,763.0 188.7,762.8 189.1,763.3 189.6,763.1 190.0,763.1 190.5,763.2 190.9,763.3 191.3,762.9 191.8,763.0 192.2,762.9 192.7,762.7 193.1,763.1 193.6,762.9 194.0,763.1 194.5,763.1 194.9,763.0 195.3,763.1 195.8,763.3 196.2,762.7 196.7,763.0 197.1,763.3 197.6,763.5 198.0,763.0 198.4,762.9 198.9,762.8 199.3,762.8 199.8,763.1 200.2,762.8 200.7,763.3 201.1,762.9 201.6,762.8 202.0,763.1 202.4,763.0 202.9,762.9 203.3,762.9 203.8,762.6 204.2,763.2 204.7,762.6 205.1,763.2 205.5,763.1 206.0,763.1 206.4,762.9 206.9,763.0 207.3,762.8 207.8,762.9 208.2,762.4 208.6,762.8 209.1,763.0 209.5,762.8 210.0,762.8 210.4,762.9 210.9,763.1 211.3,763.1 211.8,762.8 212.2,762.7 212.6,762.8 213.1,762.9 213.5,762.7 214.0,763.0 214.4,762.8 214.9,762.5 215.3,762.6 215.7,762.5 216.2,762.9 216.6,762.8 217.1,763.0 217.5,762.6 218.0,762.9 218.4,763.1 218.9,762.9 219.3,762.7 219.7,763.3 220.2,763.1 220.6,762.6 221.1,762.8 221.5,762.8 222.0,763.1 222.4,762.4 222.8,762.5 223.3,762.6 223.7,763.0 224.2,762.6 224.6,762.5 225.1,762.8 225.5,762.8 226.0,762.8 226.4,762.6 226.8,762.8 227.3,762.8 227.7,763.1 228.2,763.1 228.6,762.5 229.1,762.3 229.5,762.5 229.9,762.4 230.4,762.8 230.8,762.7 231.3,762.6 231.7,762.7 232.2,762.3 232.6,763.0 233.1,762.8 233.5,762.7 233.9,762.8 234.4,762.4 234.8,763.1 235.3,762.4 235.7,762.4 236.2,762.6 236.6,762.3 237.0,762.1 237.5,762.6 237.9,762.4 238.4,762.5 238.8,762.5 239.3,762.7 239.7,762.8 240.2,762.4 240.6,762.7 241.0,762.3 241.5,762.4 241.9,762.7 242.4,762.5 242.8,762.5 243.3,762.6 243.7,762.3 244.1,762.5 244.6,762.5 245.0,763.0 245.5,762.4 245.9,762.9 246.4,762.6 246.8,762.1 247.3,762.1 247.7,762.6 248.1,762.8 248.6,762.4 249.0,762.6 249.5,762.4 249.9,762.8 250.4,762.2 250.8,762.1 251.2,762.8 251.7,762.7 252.1,762.6 252.6,762.3 253.0,762.9 253.5,762.4 253.9,762.5 254.3,762.6 254.8,762.3 255.2,762.9 255.7,762.8 256.1,762.6 256.6,762.2 257.0,762.5 257.5,762.6 257.9,762.3 258.3,762.5 258.8,762.6 259.2,762.5 259.7,762.3 260.1,761.7 260.6,762.6 261.0,762.3 261.4,762.4 261.9,762.4 262.3,762.0 262.8,762.1 263.2,762.2 263.7,762.5 264.1,762.5 264.6,762.2 265.0,762.4 265.4,762.5 265.9,762.1 266.3,762.6 266.8,762.5 267.2,762.1 267.7,762.3 268.1,762.1 268.5,762.5 269.0,762.1 269.4,762.5 269.9,761.9 270.3,762.1 270.8,762.1 271.2,761.8 271.7,762.2 272.1,762.4 272.5,761.8 273.0,762.1 273.4,761.9 273.9,762.2 274.3,761.9 274.8,762.4 275.2,762.5 275.6,762.6 276.1,762.0 276.5,762.7 277.0,762.7 277.4,762.6 277.9,762.1 278.3,762.1 278.8,762.4 279.2,761.9 279.6,762.1 280.1,761.8 280.5,761.9 281.0,762.3 281.4,762.1 281.9,762.2 282.3,762.0 282.7,762.1 283.2,762.1 283.6,761.9 284.1,762.1 284.5,761.9 285.0,762.1 285.4,762.1 285.9,761.8 286.3,761.8 286.7,761.7 287.2,761.9 287.6,762.1 288.1,762.0 288.5,762.0 289.0,762.5 289.4,762.4 289.8,761.6 290.3,762.1 290.7,762.8 291.2,762.1 291.6,762.0 292.1,762.4 292.5,761.4 293.0,761.7 293.4,761.8 293.8,762.1 294.3,761.9 294.7,761.8 295.2,761.9 295.6,762.2 296.1,761.9 296.5,761.9 296.9,761.9 297.4,762.3 297.8,761.9 298.3,762.0 298.7,761.9 299.2,761.9 299.6,762.3 300.0,761.7 300.5,761.7 300.9,762.3 301.4,762.0 301.8,762.2 302.3,762.0 302.7,761.6 303.2,761.8 303.6,761.3 304.0,761.9 304.5,762.2 304.9,761.9 305.4,762.6 305.8,761.4 306.3,761.8 306.7,761.7 307.1,761.8 307.6,762.1 308.0,761.9 308.5,762.1 308.9,762.0 309.4,761.8 309.8,762.2 310.3,761.4 310.7,762.1 311.1,761.6 311.6,762.0 312.0,762.2 312.5,761.7 312.9,761.8 313.4,761.9 313.8,761.8 314.2,762.0 314.7,761.7 315.1,761.9 315.6,761.8 316.0,761.5 316.5,762.2 316.9,762.0 317.4,762.0 317.8,762.0 318.2,762.2 318.7,761.9 319.1,761.7 319.6,761.8 320.0,762.2 320.5,761.6 320.9,761.5 321.3,761.7 321.8,762.0 322.2,762.0 322.7,761.1 323.1,761.2 323.6,761.6 324.0,762.0 324.5,761.3 324.9,761.7 325.3,761.2 325.8,761.9 326.2,761.6 326.7,761.8 327.1,761.5 327.6,761.9 328.0,761.4 328.4,761.8 328.9,761.9 329.3,761.5 329.8,761.6 330.2,762.3 330.7,761.7 331.1,761.6 331.6,761.6 332.0,761.0 332.4,761.8 332.9,761.6 333.3,762.1 333.8,762.1 334.2,761.8 334.7,761.6 335.1,761.7 335.5,761.4 336.0,761.4 336.4,761.3 336.9,761.6 337.3,761.4 337.8,761.8 338.2,761.5 338.7,761.4 339.1,761.7 339.5,762.5 340.0,761.7 340.4,760.7 340.9,761.6 341.3,761.7 341.8,761.5 342.2,761.2 342.6,761.4 343.1,761.6 343.5,761.9 344.0,761.6 344.4,761.9 344.9,761.4 345.3,761.0 345.7,761.1 346.2,761.7 346.6,761.8 347.1,761.9 347.5,761.3 348.0,761.3 348.4,761.2 348.9,761.3 349.3,761.8 349.7,762.0 350.2,761.1 350.6,761.7 351.1,760.8 351.5,762.1 352.0,761.8 352.4,761.7 352.8,761.3 353.3,761.2 353.7,761.6 354.2,761.2 354.6,761.8 355.1,761.5 355.5,761.8 356.0,761.5 356.4,761.6 356.8,761.3 357.3,760.2 357.7,761.8 358.2,761.4 358.6,761.1 359.1,761.3 359.5,760.9 359.9,761.7 360.4,761.1 360.8,761.6 361.3,761.0 361.7,761.3 362.2,761.2 362.6,761.5 363.1,761.9 363.5,761.6 363.9,761.0 364.4,761.4 364.8,761.0 365.3,761.7 365.7,761.1 366.2,760.9 366.6,762.0 367.0,761.1 367.5,760.6 367.9,761.5 368.4,760.9 368.8,761.2 369.3,760.9 369.7,761.3 370.2,761.5 370.6,761.3 371.0,761.3 371.5,761.4 371.9,761.5 372.4,760.8 372.8,761.4 373.3,761.6 373.7,761.5 374.1,761.0 374.6,761.9 375.0,761.0 375.5,760.9 375.9,760.7 376.4,761.3 376.8,761.4 377.3,761.1 377.7,761.1 378.1,760.7 378.6,761.1 379.0,761.3 379.5,761.6 379.9,761.2 380.4,761.1 380.8,760.7 381.2,761.0 381.7,760.6 382.1,760.6 382.6,761.3 383.0,761.4 383.5,761.3 383.9,761.1 384.4,761.3 384.8,760.8 385.2,760.8 385.7,760.6 386.1,760.9 386.6,761.2 387.0,760.9 387.5,761.3 387.9,761.0 388.3,761.3 388.8,760.6 389.2,761.9 389.7,760.7 390.1,760.7 390.6,761.0 391.0,760.8 391.5,760.9 391.9,760.5 392.3,760.4 392.8,760.9 393.2,760.4 393.7,761.2 394.1,760.8 394.6,760.8 395.0,761.4 395.4,760.8 395.9,761.1 396.3,760.6 396.8,761.2 397.2,761.5 397.7,761.3 398.1,760.9 398.5,760.8 399.0,760.8 399.4,761.1 399.9,760.6 400.3,761.1 400.8,760.9 401.2,760.5 401.7,760.9 402.1,761.5 402.5,760.6 403.0,760.8 403.4,761.0 403.9,760.4 404.3,761.0 404.8,760.6 405.2,760.8 405.6,759.9 406.1,761.4 406.5,760.7 407.0,760.7 407.4,760.4 407.9,760.9 408.3,761.0 408.8,760.3 409.2,760.9 409.6,760.7 410.1,760.8 410.5,760.6 411.0,761.2 411.4,760.9 411.9,760.7 412.3,760.7 412.7,760.3 413.2,760.5 413.6,760.5 414.1,760.7 414.5,760.2 415.0,760.9 415.4,760.7 415.9,761.2 416.3,761.1 416.7,760.4 417.2,760.7 417.6,761.3 418.1,760.7 418.5,760.7 419.0,761.1 419.4,760.5 419.8,760.7 420.3,760.6 420.7,760.3 421.2,760.8 421.6,760.2 422.1,760.7 422.5,760.7 423.0,760.1 423.4,760.5 423.8,760.7 424.3,760.6 424.7,760.5 425.2,761.1 425.6,760.3 426.1,760.6 426.5,761.0 426.9,760.9 427.4,760.2 427.8,761.0 428.3,759.7 428.7,760.9 429.2,760.4 429.6,761.5 430.1,760.5 430.5,760.7 430.9,760.3 431.4,760.4 431.8,760.6 432.3,759.7 432.7,760.2 433.2,760.8 433.6,760.3 434.0,761.6 434.5,760.7 434.9,760.0 435.4,760.7 435.8,760.4 436.3,760.9 436.7,760.1 437.2,760.4 437.6,760.4 438.0,760.1 438.5,759.8 438.9,760.1 439.4,761.1 439.8,760.3 440.3,760.3 440.7,760.8 441.1,761.0 441.6,760.6 442.0,760.5 442.5,760.4 442.9,760.7 443.4,760.3 443.8,760.3 444.2,760.5 444.7,760.2 445.1,760.6 445.6,761.0 446.0,760.3 446.5,760.0 446.9,759.3 447.4,761.2 447.8,760.5 448.2,760.7 448.7,760.2 449.1,760.7 449.6,760.3 450.0,759.9 450.5,760.6 450.9,760.3 451.3,759.7 451.8,759.9 452.2,760.9 452.7,759.5 453.1,760.5 453.6,760.1 454.0,760.4 454.5,760.4 454.9,760.5 455.3,760.0 455.8,760.5 456.2,760.7 456.7,760.4 457.1,760.2 457.6,761.0 458.0,759.9 458.4,760.5 458.9,759.9 459.3,759.6 459.8,760.1 460.2,760.0 460.7,760.3 461.1,760.4 461.6,760.9 462.0,760.2 462.4,760.4 462.9,761.1 463.3,760.0 463.8,759.5 464.2,760.0 464.7,759.7 465.1,760.2 465.5,760.5 466.0,760.1 466.4,760.2 466.9,760.5 467.3,759.7 467.8,760.0 468.2,760.3 468.7,760.0 469.1,760.1 469.5,759.8 470.0,759.4 470.4,760.3 470.9,760.5 471.3,759.5 471.8,759.1 472.2,760.3 472.6,760.4 473.1,760.5 473.5,760.0 474.0,760.0 474.4,760.1 474.9,759.7 475.3,760.3 475.8,760.2 476.2,760.5 476.6,759.4 477.1,759.5 477.5,759.4 478.0,760.3 478.4,759.4 478.9,759.8 479.3,759.6 479.7,759.7 480.2,760.1 480.6,760.0 481.1,760.5 481.5,760.1 482.0,760.0 482.4,760.4 482.9,759.9 483.3,759.4 483.7,760.1 484.2,760.3 484.6,760.2 485.1,759.8 485.5,759.1 486.0,759.8 486.4,759.8 486.8,760.4 487.3,759.7 487.7,759.6 488.2,760.0 488.6,759.8 489.1,760.1 489.5,759.5 489.9,759.2 490.4,759.6 490.8,759.6 491.3,759.8 491.7,760.1 492.2,760.1 492.6,759.9 493.1,759.7 493.5,759.8 493.9,759.3 494.4,759.4 494.8,759.1 495.3,759.4 495.7,759.8 496.2,759.7 496.6,760.4 497.0,759.0 497.5,760.0 497.9,759.9 498.4,758.9 498.8,760.1 499.3,760.0 499.7,759.7 500.2,759.9 500.6,759.6 501.0,759.6 501.5,759.4 501.9,759.7 502.4,759.4 502.8,759.8 503.3,759.4 503.7,759.1 504.1,760.4 504.6,759.7 505.0,759.5 505.5,760.4 505.9,760.9 506.4,759.5 506.8,759.9 507.3,759.3 507.7,759.6 508.1,759.6 508.6,759.7 509.0,759.5 509.5,760.0 509.9,759.8 510.4,759.2 510.8,759.7 511.2,759.3 511.7,759.5 512.1,759.7 512.6,759.9 513.0,759.2 513.5,759.9 513.9,759.3 514.4,760.2 514.8,759.4 515.2,759.3 515.7,759.8 516.1,760.2 516.6,759.5 517.0,759.4 517.5,759.7 517.9,759.8 518.3,759.1 518.8,759.5 519.2,759.6 519.7,759.1 520.1,759.4 520.6,759.7 521.0,759.0 521.5,759.6 521.9,759.0 522.3,759.7 522.8,759.3 523.2,758.9 523.7,759.2 524.1,759.2 524.6,759.2 525.0,759.0 525.4,759.3 525.9,759.2 526.3,759.5 526.8,758.5 527.2,759.7 527.7,759.0 528.1,759.8 528.6,759.1 529.0,758.7 529.4,759.8 529.9,758.5 530.3,759.7 530.8,759.7 531.2,759.2 531.7,759.8 532.1,758.9 532.5,759.1 533.0,760.5 533.4,759.9 533.9,759.6 534.3,759.1 534.8,759.7 535.2,759.6 535.6,759.0 536.1,759.7 536.5,759.1 537.0,759.8 537.4,758.8 537.9,758.6 538.3,759.7 538.8,760.3 539.2,760.0 539.6,758.8 540.1,759.4 540.5,758.7 541.0,759.8 541.4,759.6 541.9,759.2 542.3,758.7 542.7,759.3 543.2,759.6 543.6,759.0 544.1,759.1 544.5,758.9 545.0,759.2 545.4,759.4 545.9,759.1 546.3,760.2 546.7,759.0 547.2,758.6 547.6,758.9 548.1,759.5 548.5,759.8 549.0,758.5 549.4,759.3 549.8,759.2 550.3,759.0 550.7,759.3 551.2,759.0 551.6,758.4 552.1,759.3 552.5,758.2 553.0,758.9 553.4,758.9 553.8,758.6 554.3,758.6 554.7,758.5 555.2,758.8 555.6,759.3 556.1,758.2 556.5,759.1 556.9,759.4 557.4,758.6 557.8,758.7 558.3,759.0 558.7,758.9 559.2,758.7 559.6,758.1 560.1,759.0 560.5,759.5 560.9,759.2 561.4,758.7 561.8,759.0 562.3,759.2 562.7,758.6 563.2,758.6 563.6,759.0 564.0,758.8 564.5,759.2 564.9,759.2 565.4,759.0 565.8,759.5 566.3,758.7 566.7,758.9 567.2,759.1 567.6,758.8 568.0,758.8 568.5,759.2 568.9,759.1 569.4,759.2 569.8,758.2 570.3,759.6 570.7,758.9 571.1,758.4 571.6,759.3 572.0,759.3 572.5,759.3 572.9,759.7 573.4,758.2 573.8,758.9 574.3,759.3 574.7,759.1 575.1,758.7 575.6,759.0 576.0,759.2 576.5,758.6 576.9,759.2 577.4,759.0 577.8,758.7 578.2,759.1 578.7,758.7 579.1,759.1 579.6,757.5 580.0,759.0 580.5,758.4 580.9,759.2 581.3,759.3 581.8,758.8 582.2,758.9 582.7,758.9 583.1,758.7 583.6,758.3 584.0,757.8 584.5,757.7 584.9,758.7 585.3,757.8 585.8,757.9 586.2,759.0 586.7,758.9 587.1,758.7 587.6,757.7 588.0,758.7 588.4,758.8 588.9,758.0 589.3,758.8 589.8,758.7 590.2,758.4 590.7,758.6 591.1,759.8 591.6,759.2 592.0,758.3 592.4,759.3 592.9,758.0 593.3,758.7 593.8,758.5 594.2,758.5 594.7,759.5 595.1,758.9 595.5,759.1 596.0,758.5 596.4,757.8 596.9,758.7 597.3,758.5 597.8,759.5 598.2,758.7 598.7,758.7 599.1,758.6 599.5,758.3 600.0,757.9 600.4,758.5 600.9,758.3 601.3,759.3 601.8,758.2 602.2,758.5 602.6,759.4 603.1,758.3 603.5,758.8 604.0,758.0 604.4,758.3 604.9,758.4 605.3,757.6 605.8,758.5 606.2,758.6 606.6,758.4 607.1,758.4 607.5,758.9 608.0,758.1 608.4,758.2 608.9,758.7 609.3,759.2 609.7,757.8 610.2,757.7 610.6,757.9 611.1,757.9 611.5,757.5 612.0,758.2 612.4,757.5 612.9,758.4 613.3,758.8 613.7,758.3 614.2,758.5 614.6,758.1 615.1,757.4 615.5,758.1 616.0,757.7 616.4,757.2 616.8,757.4 617.3,758.2 617.7,758.6 618.2,757.2 618.6,758.8 619.1,759.1 619.5,759.2 620.0,757.6 620.4,759.0 620.8,758.3 621.3,758.3 621.7,757.5 622.2,758.9 622.6,758.1 623.1,758.0 623.5,757.4 623.9,758.3 624.4,758.0 624.8,758.3 625.3,757.6 625.7,757.7 626.2,758.3 626.6,757.8 627.0,758.9 627.5,758.1 627.9,758.6 628.4,758.3 628.8,757.6 629.3,757.0 629.7,758.0 630.2,758.1 630.6,758.2 631.0,757.7 631.5,758.1 631.9,757.5 632.4,757.2 632.8,757.7 633.3,758.2 633.7,757.6 634.1,758.4 634.6,758.9 635.0,757.4 635.5,757.0 635.9,757.3 636.4,758.2 636.8,759.7 637.3,758.4 637.7,757.6 638.1,758.2 638.6,757.2 639.0,758.4 639.5,757.7 639.9,757.8 640.4,757.8 640.8,758.7 641.2,758.0 641.7,757.8 642.1,758.1 642.6,758.6 643.0,758.2 643.5,758.4 643.9,757.7 644.4,757.4 644.8,757.7 645.2,757.7 645.7,758.0 646.1,757.8 646.6,758.9 647.0,757.8 647.5,757.4 647.9,758.1 648.3,757.5 648.8,758.6 649.2,757.8 649.7,757.9 650.1,757.6 650.6,757.7 651.0,756.6 651.5,759.5 651.9,758.6 652.3,758.2 652.8,757.7 653.2,758.1 653.7,758.1 654.1,758.6 654.6,758.5 655.0,758.2 655.4,756.9 655.9,758.2 656.3,756.3 656.8,757.2 657.2,757.9 657.7,757.3 658.1,757.2 658.6,758.4 659.0,758.6 659.4,756.9 659.9,758.2 660.3,757.2 660.8,757.3 661.2,758.6 661.7,757.3 662.1,757.4 662.5,757.0 663.0,757.7 663.4,757.4 663.9,757.4 664.3,757.8 664.8,756.7 665.2,757.1 665.7,756.8 666.1,757.4 666.5,757.0 667.0,758.1 667.4,757.9 667.9,757.0 668.3,757.7 668.8,757.8 669.2,757.5 669.6,758.4 670.1,757.5 670.5,757.3 671.0,757.7 671.4,758.2 671.9,756.6 672.3,757.3 672.7,758.1 673.2,757.9 673.6,758.4 674.1,758.5 674.5,758.6 675.0,758.0 675.4,757.3 675.9,757.1 676.3,757.6 676.7,756.9 677.2,757.2 677.6,758.1 678.1,757.9 678.5,757.3 679.0,757.1 679.4,756.8 679.8,758.2 680.3,758.5 680.7,756.3 681.2,757.6 681.6,756.9 682.1,757.4 682.5,758.2 683.0,756.6 683.4,757.1 683.8,756.6 684.3,757.0 684.7,757.9 685.2,757.4 685.6,756.8 686.1,757.7 686.5,757.2 686.9,756.7 687.4,758.0 687.8,757.5 688.3,757.2 688.7,756.8 689.2,757.4 689.6,757.7 690.1,757.0 690.5,757.6 690.9,757.0 691.4,757.1 691.8,757.4 692.3,756.8 692.7,756.6 693.2,758.0 693.6,756.9 694.0,757.3 694.5,757.4 694.9,757.2 695.4,756.6 695.8,757.3 696.3,757.4 696.7,757.9 697.2,757.3 697.6,757.2 698.0,757.7 698.5,757.3 698.9,756.9 699.4,756.4 699.8,757.3 700.3,756.0 700.7,756.6 701.1,756.6 701.6,756.8 702.0,757.1 702.5,757.5 702.9,757.1 703.4,757.1 703.8,757.0 704.3,756.2 704.7,755.9 705.1,756.8 705.6,756.5 706.0,757.4 706.5,758.2 706.9,757.1 707.4,756.9 707.8,756.2 708.2,755.6 708.7,756.8 709.1,756.2 709.6,756.3 710.0,756.9 710.5,756.5 710.9,756.7 711.4,756.1 711.8,757.6 712.2,758.3 712.7,756.9 713.1,756.4 713.6,756.3 714.0,757.2 714.5,756.6 714.9,757.3 715.3,756.5 715.8,757.3 716.2,757.5 716.7,756.3 717.1,757.6 717.6,757.7 718.0,756.4 718.4,756.8 718.9,758.2 719.3,756.2 719.8,757.6 720.2,757.1 720.7,756.9 721.1,755.7 721.6,756.8 722.0,756.3 722.4,756.9 722.9,756.5 723.3,757.6 723.8,756.8 724.2,757.1 724.7,757.4 725.1,756.6 725.5,756.2 726.0,756.5 726.4,756.9 726.9,756.3 727.3,757.4 727.8,756.5 728.2,756.4 728.7,756.8 729.1,756.9 729.5,756.6 730.0,757.0 730.4,756.8 730.9,756.3 731.3,757.8 731.8,755.9 732.2,756.4 732.6,756.5 733.1,757.3 733.5,756.9 734.0,757.0 734.4,756.2 734.9,756.3 735.3,756.0 735.8,756.6 736.2,757.8 736.6,757.2 737.1,756.8 737.5,756.4 738.0,757.5 738.4,756.7 738.9,756.6 739.3,756.9 739.7,756.7 740.2,755.2 740.6,756.6 741.1,755.4 741.5,756.4 742.0,757.0 742.4,756.2 742.9,756.8 743.3,756.6 743.7,757.9 744.2,756.3 744.6,756.9 745.1,755.9 745.5,756.5 746.0,756.7 746.4,757.1 746.8,756.5 747.3,756.7 747.7,757.0 748.2,755.4 748.6,756.6 749.1,755.9 749.5,755.6 750.0,756.2 750.4,756.1 750.8,756.2 751.3,755.9 751.7,756.1 752.2,756.1 752.6,756.4 753.1,756.7 753.5,756.7 753.9,756.8 754.4,756.3 754.8,755.6 755.3,757.0 755.7,756.8 756.2,757.0 756.6,756.4 757.1,755.8 757.5,756.6 757.9,756.2 758.4,757.8 758.8,756.4 759.3,756.1 759.7,756.7 760.2,757.3 760.6,756.1 761.0,756.4 761.5,755.2 761.9,756.7 762.4,756.4 762.8,756.5 763.3,756.2 763.7,757.4 764.1,755.5 764.6,755.9 765.0,756.4 765.5,756.5 765.9,755.9 766.4,756.0 766.8,756.5 767.3,756.3 767.7,756.0 768.1,756.5 768.6,756.4 769.0,756.5 769.5,756.4 769.9,757.0 770.4,756.8 770.8,756.0 771.2,755.7 771.7,756.2 772.1,758.4 772.6,757.1 773.0,755.9 773.5,755.1 773.9,755.4 774.4,756.3 774.8,756.4 775.2,756.4 775.7,755.1 776.1,756.0 776.6,756.7 777.0,755.5 777.5,755.6 777.9,757.3 778.3,756.5 778.8,755.5 779.2,755.5 779.7,756.8 780.1,756.1 780.6,755.5 781.0,755.8 781.5,756.7 781.9,756.2 782.3,755.6 782.8,755.7 783.2,756.6 783.7,754.6 784.1,755.9 784.6,756.9 785.0,756.2 785.4,757.7 785.9,756.4 786.3,756.0 786.8,754.5 787.2,755.8 787.7,755.7 788.1,755.5 788.6,755.8 789.0,756.3 789.4,755.1 789.9,755.6 790.3,755.0 790.8,755.3 791.2,756.5 791.7,756.2 792.1,756.1 792.5,756.1 793.0,755.6 793.4,756.0 793.9,756.4 794.3,754.9 794.8,755.0 795.2,755.8 795.7,756.5 796.1,756.2 796.5,756.3 797.0,756.4 797.4,756.4 797.9,755.7 798.3,755.6 798.8,755.5 799.2,756.4 799.6,755.6 800.1,754.5 800.5,755.6 801.0,756.0 801.4,754.0 801.9,755.6 802.3,756.1 802.8,755.2 803.2,756.2 803.6,755.9 804.1,755.1 804.5,756.1 805.0,756.6 805.4,755.3 805.9,755.2 806.3,756.5 806.7,755.9 807.2,755.0 807.6,755.5 808.1,755.1 808.5,755.7 809.0,756.0 809.4,756.0 809.8,755.8 810.3,755.5 810.7,757.3 811.2,756.8 811.6,755.6 812.1,755.2 812.5,756.0 813.0,755.6 813.4,756.3 813.8,756.4 814.3,755.5 814.7,755.6 815.2,755.9 815.6,756.4 816.1,755.5 816.5,755.6 816.9,755.7 817.4,755.6 817.8,755.7 818.3,755.2 818.7,755.3 819.2,754.4 819.6,754.6 820.1,755.5 820.5,756.3 820.9,755.1 821.4,755.9 821.8,754.5 822.3,756.4 822.7,755.7 823.2,754.5 823.6,755.4 824.0,755.0 824.5,755.0 824.9,755.7 825.4,754.9 825.8,756.0 826.3,755.6 826.7,754.1 827.2,755.5 827.6,755.2 828.0,756.1 828.5,754.5 828.9,756.0 829.4,755.9 829.8,755.8 830.3,756.0 830.7,756.3 831.1,755.5 831.6,755.7 832.0,755.4 832.5,756.0 832.9,755.9 833.4,755.5 833.8,755.3 834.3,755.9 834.7,755.3 835.1,755.5 835.6,754.6 836.0,754.9 836.5,755.0 836.9,754.6 837.4,755.7 837.8,754.4 838.2,755.2 838.7,755.6 839.1,755.0 839.6,755.9 840.0,754.1 840.5,755.1 840.9,756.2 841.4,756.0 841.8,755.6 842.2,755.6 842.7,754.9 843.1,754.6 843.6,754.5 844.0,754.8 844.5,755.8 844.9,754.5 845.3,754.4 845.8,756.4 846.2,755.5 846.7,755.4 847.1,755.7 847.6,754.5 848.0,754.8 848.5,755.1 848.9,755.9 849.3,756.5 849.8,755.7 850.2,755.7 850.7,755.7 851.1,756.5 851.6,756.1 852.0,755.4 852.4,754.9 852.9,755.4 853.3,755.2 853.8,755.1 854.2,755.1 854.7,754.3 855.1,755.6 855.5,754.9 856.0,755.9 856.4,754.3 856.9,754.6 857.3,754.4 857.8,754.9 858.2,755.1 858.7,755.8 859.1,754.8 859.5,754.1 860.0,756.8 860.4,753.8 860.9,755.5 861.3,754.7 861.8,755.5 862.2,755.1 862.6,754.4 863.1,755.1 863.5,753.7 864.0,754.9 864.4,754.5 864.9,755.3 865.3,755.2 865.8,755.2 866.2,754.6 866.6,753.8 867.1,754.9 867.5,755.7 868.0,755.3 868.4,755.8 868.9,754.5 869.3,754.8 869.7,755.6 870.2,755.1 870.6,754.2 871.1,754.5 871.5,755.2 872.0,754.3 872.4,754.5 872.9,755.2 873.3,754.7 873.7,753.5 874.2,755.5 874.6,754.1 875.1,754.9 875.5,754.3 876.0,754.5 876.4,754.6 876.8,754.9 877.3,754.7 877.7,754.3 878.2,754.4 878.6,755.7 879.1,754.4 879.5,753.8 880.0,754.1 880.4,754.6 880.8,755.9 881.3,754.3 881.7,754.2 882.2,753.7 882.6,755.3 883.1,754.8 883.5,755.0 883.9,754.8 884.4,755.8 884.8,755.0 885.3,754.9 885.7,754.9 886.2,753.5 886.6,755.0 887.1,754.9 887.5,753.8 887.9,755.0 888.4,753.8 888.8,754.3 889.3,755.0 889.7,755.1 890.2,754.5 890.6,754.7 891.0,754.5 891.5,755.0 891.9,754.1 892.4,755.0 892.8,754.9 893.3,754.7 893.7,755.4 894.2,754.7 894.6,754.7 895.0,755.5 895.5,755.7 895.9,753.6 896.4,754.7 896.8,754.6 897.3,754.9 897.7,753.4 898.1,754.6 898.6,755.7 899.0,754.1 899.5,755.1 899.9,754.1 900.4,754.5 900.8,753.6 901.2,754.1 901.7,754.7 902.1,753.4 902.6,752.5 903.0,754.8 903.5,753.6 903.9,754.1 904.4,754.1 904.8,755.2 905.2,755.0 905.7,753.4 906.1,754.2 906.6,754.7 907.0,753.1 907.5,753.5 907.9,753.8 908.3,755.0 908.8,754.3 909.2,753.3 909.7,755.7 910.1,755.4 910.6,754.8 911.0,753.6 911.5,754.1 911.9,753.9 912.3,754.1 912.8,754.2 913.2,753.4 913.7,751.7 914.1,753.9 914.6,753.3 915.0,754.5 915.4,753.1 915.9,754.1 916.3,754.1 916.8,754.5 917.2,754.7 917.7,754.6 918.1,754.9 918.6,755.1 919.0,752.8 919.4,753.8 919.9,753.4 920.3,753.8 920.8,755.1 921.2,754.1 921.7,754.8 922.1,754.7 922.5,754.2 923.0,754.0 923.4,754.0 923.9,754.0 924.3,754.3 924.8,754.1 925.2,753.2 925.7,752.5 926.1,753.3 926.5,754.2 927.0,753.8 927.4,753.3 927.9,753.3 928.3,753.1 928.8,753.1 929.2,753.7 929.6,754.2 930.1,755.1 930.5,753.2 931.0,753.5 931.4,754.6 931.9,754.0 932.3,754.3 932.8,754.3 933.2,752.7 933.6,754.2 934.1,752.2 934.5,754.0 935.0,754.5 935.4,753.8 935.9,752.2 936.3,754.0 936.7,753.5 937.2,755.6 937.6,753.5 938.1,754.9 938.5,754.0 939.0,752.9 939.4,754.1 939.9,753.3 940.3,754.0 940.7,754.1 941.2,753.7 941.6,753.1 942.1,753.8 942.5,753.9 943.0,754.5 943.4,755.1 943.8,753.7 944.3,753.9 944.7,753.6 945.2,753.0 945.6,753.2 946.1,754.4 946.5,753.6 946.9,753.6 947.4,754.0 947.8,755.4 948.3,754.4 948.7,753.8 949.2,753.2 949.6,754.0 950.1,754.8 950.5,752.7 950.9,753.8 951.4,754.1 951.8,753.3 952.3,753.2 952.7,753.8 953.2,754.1 953.6,754.1 954.0,753.1 954.5,753.8 954.9,753.3 955.4,755.1 955.8,754.0 956.3,753.9 956.7,754.0 957.2,755.1 957.6,754.0 958.0,752.5 958.5,753.4 958.9,754.0 959.4,754.2 959.8,754.6 960.3,753.4 960.7,754.2 961.1,753.9 961.6,752.9 962.0,752.9 962.5,753.1 962.9,754.8 963.4,754.0 963.8,752.7 964.3,754.4 964.7,752.6 965.1,753.6 965.6,752.8 966.0,753.8 966.5,754.4 966.9,754.3 967.4,752.4 967.8,753.8 968.2,754.4 968.7,752.9 969.1,754.7 969.6,753.6 970.0,753.2 970.5,753.3 970.9,753.1 971.4,753.5 971.8,755.3 972.2,753.3 972.7,753.5 973.1,753.6 973.6,753.1 974.0,752.8 974.5,753.3 974.9,752.3 975.3,751.7 975.8,753.2 976.2,753.7 976.7,754.4 977.1,752.9 977.6,754.7 978.0,752.1 978.5,752.6 978.9,753.8 979.3,752.8 979.8,754.0 980.2,754.2 980.7,752.8 981.1,754.1 981.6,753.1 982.0,753.4" stroke="#edb120" stroke-width="2" marker-start="url(#mq)" marker-mid="url(#mq)" marker-end="url(#mq)"/>
</g>
<g>
<use href="#st" x="76.9" y="761.6"/>
<use href="#st" x="85.7" y="762.5"/>
<use href="#st" x="94.6" y="764.1"/>
<use href="#st" x="103.5" y="764.9"/>
<use href="#st" x="112.4" y="772.1"/>
<use href="#st" x="121.2" y="771.7"/>
<use href="#st" x="130.1" y="766.0"/>
<use href="#st" x="139.0" y="764.9"/>
<use href="#st" x="147.9" y="765.2"/>
<use href="#st" x="156.7" y="764.1"/>
<use href="#st" x="165.6" y="768.9"/>
<use href="#st" x="174.5" y="767.3"/>
<use href="#st" x="183.4" y="768.1"/>
<use href="#st" x="192.2" y="762.7"/>
<use href="#st" x="201.1" y="761.9"/>
<use href="#st" x="210.0" y="760.8"/>
<use href="#st" x="218.9" y="761.4"/>
<use href="#st" x="227.7" y="761.4"/>
<use href="#st" x="236.6" y="760.8"/>
<use href="#st" x="245.5" y="760.8"/>
<use href="#st" x="254.3" y="760.6"/>
<use href="#st" x="263.2" y="760.2"/>
<use href="#st" x="272.1" y="758.1"/>
<use href="#st" x="281.0" y="752.0"/>
<use href="#st" x="289.8" y="754.6"/>
<use href="#st" x="298.7" y="744.8"/>
<use href="#st" x="307.6" y="749.6"/>
<use href="#st" x="316.5" y="744.8"/>
<use href="#st" x="325.3" y="731.1"/>
<use href="#st" x="334.2" y="702.9"/>
<use href="#st" x="343.1" y="686.8"/>
<use href="#st" x="352.0" y="661.1"/>
<use href="#st" x="360.8" y="647.4"/>
<use href="#st" x="369.7" y="678.8"/>
<use href="#st" x="378.6" y="639.6"/>
<use href="#st" x="387.5" y="649.2"/>
<use href="#st" x="396.3" y="642.2"/>
<use href="#st" x="405.2" y="650.4"/>
<use href="#st" x="414.1" y="639.9"/>
<use href="#st" x="423.0" y="636.5"/>
<use href="#st" x="431.8" y="642.9"/>
<use href="#st" x="440.7" y="639.9"/>
<use href="#st" x="449.6" y="639.4"/>
<use href="#st" x="458.4" y="640.5"/>
<use href="#st" x="467.3" y="635.3"/>
<use href="#st" x="476.2" y="631.6"/>
<use href="#st" x="485.1" y="629.2"/>
<use href="#st" x="493.9" y="637.8"/>
<use href="#st" x="502.8" y="626.9"/>
<use href="#st" x="511.7" y="626.9"/>
<use href="#st" x="520.6" y="630.5"/>
<use href="#st" x="529.4" y="623.8"/>
<use href="#st" x="538.3" y="625.2"/>
<use href="#st" x="547.2" y="625.2"/>
<use href="#st" x="556.1" y="671.7"/>
<use href="#st" x="564.9" y="626.9"/>
<use href="#st" x="573.8" y="625.2"/>
<use href="#st" x="582.7" y="632.1"/>
<use href="#st" x="591.6" y="647.3"/>
<use href="#st" x="600.4" y="619.1"/>
<use href="#st" x="609.3" y="620.1"/>
<use href="#st" x="618.2" y="621.3"/>
<use href="#st" x="627.0" y="621.8"/>
<use href="#st" x="635.9" y="621.0"/>
<use href="#st" x="644.8" y="632.5"/>
<use href="#st" x="653.7" y="618.1"/>
<use href="#st" x="662.5" y="623.0"/>
<use href="#st" x="671.4" y="612.4"/>
<use href="#st" x="680.3" y="618.5"/>
<use href="#st" x="689.2" y="617.7"/>
<use href="#st" x="698.0" y="617.7"/>
<use href="#st" x="706.9" y="618.5"/>
<use href="#st" x="715.8" y="613.2"/>
<use href="#st" x="724.7" y="611.5"/>
<use href="#st" x="733.5" y="615.2"/>
<use href="#st" x="742.4" y="615.6"/>
<use href="#st" x="751.3" y="616.4"/>
<use href="#st" x="760.2" y="612.8"/>
<use href="#st" x="769.0" y="613.6"/>
<use href="#st" x="777.9" y="613.2"/>
<use href="#st" x="786.8" y="612.0"/>
<use href="#st" x="795.7" y="611.1"/>
<use href="#st" x="804.5" y="610.1"/>
<use href="#st" x="813.4" y="607.7"/>
<use href="#st" x="822.3" y="612.3"/>
<use href="#st" x="831.1" y="605.7"/>
<use href="#st" x="840.0" y="612.8"/>
<use href="#st" x="848.9" y="613.2"/>
<use href="#st" x="857.8" y="612.1"/>
<use href="#st" x="866.6" y="612.1"/>
<use href="#st" x="875.5" y="605.4"/>
<use href="#st" x="884.4" y="614.0"/>
<use href="#st" x="893.3" y="603.2"/>
<use href="#st" x="902.1" y="604.3"/>
<use href="#st" x="911.0" y="602.2"/>
<use href="#st" x="919.9" y="602.2"/>
<use href="#st" x="928.8" y="600.5"/>
<use href="#st" x="937.6" y="601.1"/>
<use href="#st" x="946.5" y="592.6"/>
<use href="#st" x="955.4" y="597.9"/>
<use href="#st" x="964.3" y="590.5"/>
<use href="#st" x="973.1" y="602.6"/>
<use href="#st" x="982.0" y="299.6"/>
</g>
<g font-family="Liberation Sans, Arial, sans-serif" font-size="12" fill="#5c5c5c">
<text x="68.0" y="859.5" text-anchor="middle">0</text>
<text x="156.7" y="859.5" text-anchor="middle">200</text>
<text x="245.5" y="859.5" text-anchor="middle">400</text>
<text x="334.2" y="859.5" text-anchor="middle">600</text>
<text x="423.0" y="859.5" text-anchor="middle">800</text>
<text x="511.7" y="859.5" text-anchor="middle">1000</text>
<text x="600.4" y="859.5" text-anchor="middle">1200</text>
<text x="689.2" y="859.5" text-anchor="middle">1400</text>
<text x="777.9" y="859.5" text-anchor="middle">1600</text>
<text x="866.6" y="859.5" text-anchor="middle">1800</text>
<text x="955.4" y="859.5" text-anchor="middle">2000</text>
<text x="64" y="848.7" text-anchor="end">-100</text>
<text x="64" y="768.2" text-anchor="end">0</text>
<text x="64" y="687.8" text-anchor="end">100</text>
<text x="64" y="607.3" text-anchor="end">200</text>
<text x="64" y="526.9" text-anchor="end">300</text>
<text x="64" y="446.4" text-anchor="end">400</text>
<text x="64" y="366.0" text-anchor="end">500</text>
<text x="64" y="285.5" text-anchor="end">600</text>
<text x="64" y="205.1" text-anchor="end">700</text>
<text x="64" y="124.7" text-anchor="end">800</text>
</g>
<text x="525.5" y="116" text-anchor="middle" font-family="Liberation Sans, Arial, sans-serif" font-size="13.17" font-weight="bold" fill="#262626">Episode reward for LanderVehicle with rlSACAgent</text>
<text x="525.6" y="875.2" text-anchor="middle" font-family="Liberation Sans, Arial, sans-serif" font-size="13.25" fill="#4a4a4a">Episode Number</text>
<text transform="translate(34.3 482.8) rotate(-90)" text-anchor="middle" font-family="Liberation Sans, Arial, sans-serif" font-size="13.25" fill="#4a4a4a">Episode Reward</text>
<defs>
<symbol id="i-exp" viewBox="0 0 16 16"><path d="M0.7 9.9H12.4V13.5H0.7Z" fill="none" stroke="#787878" stroke-width="1.4"/><path d="M3.2 11.2C3.2 7.2 5.4 4.7 8.7 4.5V1.7L12.9 5.5L8.7 9.3V6.9C7.1 7 6 8.4 6 11.2Z" fill="#f4f4f4" stroke="#969696" stroke-width="1.2" stroke-linejoin="round"/><path d="M15.9 12.3V15.7H12.5Z" fill="#787878"/></symbol>
<symbol id="i-hand" viewBox="0 0 16 16"><path d="M5 15.4L1 8.8C0.3 7.5 2 6.6 2.9 7.8L4.2 9.8V3.2C4.2 1.8 6.8 1.8 6.8 3.2V7.4V1.8C6.8 0.4 9.4 0.4 9.4 1.8V7.4V2.4C9.4 1 12 1 12 2.4V7.8V4.4C12 3 14.6 3 14.6 4.4V10.4C14.6 12.6 13.4 14 13.2 15.4Z" fill="none" stroke="#787878" stroke-width="1.4" stroke-linejoin="round"/></symbol>
<symbol id="i-zin" viewBox="0 0 16 16"><g fill="none" stroke="#787878" stroke-width="1.45"><circle cx="6.4" cy="6.4" r="5.6"/><path d="M10.4 10.4L15.4 15.4M3.4 6.4H9.4M6.4 3.4V9.4"/></g></symbol>
<symbol id="i-zout" viewBox="0 0 16 16"><g fill="none" stroke="#787878" stroke-width="1.45"><circle cx="6.4" cy="6.4" r="5.6"/><path d="M10.4 10.4L15.4 15.4M3.4 6.4H9.4"/></g></symbol>
<symbol id="i-home" viewBox="0 0 16 16"><g fill="none" stroke="#787878" stroke-width="1.45"><path d="M0.6 8.4L8 1L15.4 8.4"/><path d="M2.6 7.2V15.4H6.4V10.4H9.6V15.4H13.4V7.2"/><path d="M11.2 2.4H13.2V4.6"/></g></symbol>
<symbol id="i-brush" viewBox="0 0 16 16"><g fill="none" stroke="#787878" stroke-width="1.4" stroke-linejoin="round"><path d="M7.6 0.7H11V6.2L13.2 8.8V15.3H0.9C3.8 13.4 5.8 11 5.8 8.8L7.6 6.2Z"/><path d="M5.8 8.8H13.2M5 10.9H13.2"/><path d="M3.6 13H13.2" stroke-width="1.8"/></g></symbol>
<symbol id="i-tip" viewBox="0 0 16 16"><g fill="none" stroke="#787878" stroke-width="1.4" stroke-linejoin="round"><path d="M2.4 0.7H15.3V15.3H2.4V9.8L0.5 8L2.4 6.2Z"/><path d="M5.2 6H12.8M5.2 10H12.8" stroke-width="1.5"/></g></symbol>
</defs>
<use href="#i-exp" x="884" y="101.5" width="16" height="16"/>
<use href="#i-hand" x="904" y="101.5" width="16" height="16"/>
<use href="#i-zin" x="924" y="101.5" width="16" height="16"/>
<use href="#i-zout" x="944" y="101.5" width="16" height="16"/>
<use href="#i-home" x="964" y="101.5" width="16" height="16"/>

</svg>
  <div id="rp" style="position:absolute;left:-2px;top:-2px;width:1344px;height:921px;pointer-events:none">
  <!-- progress row -->
  <div class="abs" style="left:1018px;top:97px;width:196px;height:15px;background:#fff"></div>
  <div class="abs" style="left:1018px;top:97px;width:38px;height:15px;background:#268cdd"></div>
  <div class="btn" style="left:1224px;top:92px;width:110px;height:25px;line-height:23px;border-color:#d2d2d2;background:#f4f4f4;color:#a9a9a9">Training stopped</div>
  <div class="lbl" style="left:1018px;top:128px">Episode number:</div>
  <div class="lbl" style="left:1164px;top:128px">2060/10000</div>
  <div class="lbl" style="left:1018px;top:153px">Start time:</div>
  <div class="lbl" style="left:1164px;top:153px">23-Jun-2024 23:15:17</div>
  <div class="lbl" style="left:1018px;top:178px">Duration:</div>
  <div class="lbl" style="left:1164px;top:178px">03:39:18</div>
  <div class="lbl" style="left:1018px;top:203px">Final result:</div>
  <div class="lbl" style="left:1164px;top:203px">Training finished after all agents<br>reached stop training criteria.</div>

  <!-- Training Information -->
  <div class="panel" style="left:1018px;top:244px;width:316px;height:295px">
    <div class="phead"><span>Training Information</span></div>
  </div>
  <div class="abs" style="left:1029px;top:274px;width:294px;height:95px;background:#fff;border:1px solid #a0a0a0"></div>
  <div class="abs" style="left:1030px;top:275px;width:292px;height:26px;background:#f6f6f6;border-bottom:1px solid #a0a0a0"></div>
  <div class="abs" style="left:1175px;top:275px;width:1px;height:49px;background:#a0a0a0"></div>
  <div class="abs" style="left:1030px;top:301px;width:145px;height:23px;background:#268cdd"></div>
  <div class="abs" style="left:1176px;top:301px;width:146px;height:23px;background:#268cdd"></div>
  <div class="lbl b" style="left:1033px;top:281px;color:#262626">Agent</div>
  <div class="lbl b" style="left:1180px;top:281px;color:#262626;letter-spacing:-0.25px">Status</div>
  <div class="lbl" style="left:1033px;top:305px;color:#fff">rlSACAgent</div>
  <div class="lbl" style="left:1180px;top:305px;color:#fff">Training finished</div>
  <div class="lbl b" style="left:1029px;top:380px;color:#262626">Episode Information (rlSACAgent):</div>
  <div class="lbl" style="left:1029px;top:405px">Episode reward:</div>
  <div class="lbl" style="left:1166px;top:405px">551.5374</div>
  <div class="lbl" style="left:1029px;top:430px">Average reward:</div>
  <div class="lbl" style="left:1166px;top:430px">351.1259</div>
  <div class="lbl" style="left:1029px;top:455px">Episode Q0:</div>
  <div class="lbl" style="left:1166px;top:455px">13.8968</div>
  <div class="lbl" style="left:1029px;top:480px">Evaluation statistic:</div>
  <div class="lbl" style="left:1166px;top:480px">577.3945</div>
  <div class="btn" style="left:1213px;top:504px;width:111px;height:23px;line-height:21px">More Details...</div>

  <!-- Plot Options -->
  <div class="panel" style="left:1018px;top:548px;width:316px;height:119px">
    <div class="phead"><span style="top:3px">Plot Options</span></div>
  </div>
  <div class="cb" style="left:1029px;top:580px"><svg width="12" height="12" viewBox="0 0 12 12" style="position:absolute;left:0;top:0"><path d="M1.8 6.4L4.6 9.4L10.4 2.4" fill="none" stroke="#1e1e1e" stroke-width="1.9"/></svg></div>
  <div class="lbl" style="left:1045px;top:580px">Show EpisodeQ0</div>
  <div class="cb" style="left:1029px;top:607px"><svg width="12" height="12" viewBox="0 0 12 12" style="position:absolute;left:0;top:0"><path d="M1.8 6.4L4.6 9.4L10.4 2.4" fill="none" stroke="#1e1e1e" stroke-width="1.9"/></svg></div>
  <div class="lbl" style="left:1045px;top:607px">Show evaluation statistic</div>
  <div class="cb" style="left:1029px;top:636px"></div>
  <div class="lbl" style="left:1045px;top:636px">Show last N episodes</div>
  <div class="abs" style="left:1173px;top:632px;width:150px;height:23px;border:1px solid #dcdcdc;background:#f4f4f4;border-radius:2px"></div>
  <div class="lbl" style="left:1173px;top:636px;width:144px;text-align:right;color:#a9a9a9">1e+04</div>

  <!-- Legend -->
  <div class="panel" style="left:1018px;top:676px;width:316px;height:103px"></div>
  <div class="abs" style="left:1024px;top:682px;width:305px;height:90px;background:#fff"></div>
  <svg class="abs" style="left:1018px;top:676px" width="316" height="103" viewBox="1018 676 316 103">
    <g fill="none" stroke-width="1">
      <path d="M1098.5 689.5H1139" stroke="#7fd0f3"/><circle cx="1118.8" cy="689.5" r="1.7" fill="#4dbeee"/>
      <path d="M1098.5 708.5H1139" stroke="#0072bd" stroke-width="1.2"/><circle cx="1118.8" cy="708.5" r="1.9" fill="#0072bd"/>
      <path d="M1098.5 727.7H1139" stroke="#edb120" stroke-width="1.2"/><circle cx="1118.8" cy="727.7" r="1.7" fill="#edb120"/>
      <g transform="translate(1118.8 756.3)" stroke="#a2142f" stroke-width="0.9"><path d="M-4.6 0H4.6M0 -4.6V4.6M-3.2 -3.2L3.2 3.2M-3.2 3.2L3.2 -3.2"/></g>
    </g>
    <g font-family="Liberation Sans, Arial, sans-serif" font-size="10.8" fill="#5a5a5a">
      <text x="1143" y="693.4">Episode reward</text>
      <text x="1143" y="712.4">Average reward</text>
      <text x="1143" y="731.6">Episode Q0</text>
      <text x="1143" y="753.8">Evaluation statistic</text>
      <text x="1143" y="765.8">(MeanEpisodeReward)</text>
    </g>
    <rect x="1185" y="679" width="143" height="20" fill="#f6f6f6" fill-opacity="0.97"/>
    <use href="#i-exp" x="1187" y="680.5" width="16" height="16"/>
    <use href="#i-brush" x="1208" y="680.5" width="16" height="16"/>
    <use href="#i-tip" x="1228" y="680.5" width="16" height="16"/>
    <use href="#i-hand" x="1248" y="680.5" width="16" height="16"/>
    <use href="#i-zin" x="1268" y="680.5" width="16" height="16"/>
    <use href="#i-zout" x="1288" y="680.5" width="16" height="16"/>
    <use href="#i-home" x="1308" y="680.5" width="16" height="16"/>
  </svg>
</div>

  <div id="status"></div>
  <svg class="abs" style="left:-2px;top:-2px" width="1344" height="90" viewBox="0 0 1344 90">
    <!-- logo -->
    <g>
      <path d="M10.8 16.8L14 15L17 12.6L19.6 9.9L20.3 10.4L17.6 14.4L16.2 17.2L14.9 19.2L12.5 18.9Z" fill="#3a92dc"/>
      <path d="M20.9 9.1L21.8 11L22.6 14L23.4 16.6L21.6 18.9L19.6 21.4L17.5 22.9L16.6 20.8L18.4 18.6L19.8 15.6L20.5 11.6Z" fill="#ee8c1e"/>
      <path d="M20.9 10.5L21.9 13L21.6 17L19 21.5L17.6 22.6L19.4 18.6L20.4 15Z" fill="#f6ba2a"/>
      <path d="M19.9 10L20.9 9.1L20.6 11.5L18.8 15L17.4 17.5L16 20.2L15 19.6L15.2 18L17 14.6Z" fill="#5c1a1a"/>
      <path d="M20.6 11.4L19.8 15.6L18.4 18.6L16.6 20.8L16 20.2L17.4 17.5L18.8 15Z" fill="#b11a2e"/>
      <path d="M20.9 9.1L21.9 9.6L23.2 13L24.6 16.6L25.9 19.6L24.6 19.3L23.4 18.2L22.2 18.4L21.6 18.9L23 16.6L22.4 13.6L21.6 11Z" fill="#cf3a1c"/>
    </g>
    <!-- window controls -->
    <g stroke="#111" stroke-width="1" fill="none">
      <path d="M1224 16.5H1234" shape-rendering="crispEdges"/>
      <rect x="1269.5" y="11.5" width="9" height="9" rx="1.6"/>
    </g>
    <path d="M1315 11L1325 21M1325 11L1315 21" stroke="#111" stroke-width="1.1" fill="none"/>
    <!-- kebabs -->
    <g fill="#6a6a6a">
      <rect x="986" y="65.5" width="2" height="2"/><rect x="986" y="69.5" width="2" height="2"/><rect x="986" y="73.5" width="2" height="2"/>
      <rect x="1326" y="65.5" width="2" height="2"/><rect x="1326" y="69.5" width="2" height="2"/><rect x="1326" y="73.5" width="2" height="2"/>
    </g>
    <!-- grip -->
    <g stroke="#a8a8a8" stroke-width="1" shape-rendering="crispEdges"><path d="M7 67.5H11M7 69.5H11M7 71.5H11M7 73.5H11"/></g>
  </svg>
  <svg class="abs" style="left:1326px;top:900px" width="14" height="14" viewBox="0 0 14 14"><path d="M2.5 2.5L9 7.5L2.5 12.5Z" fill="#8c8c8c"/><rect x="9.6" y="2.5" width="1.6" height="10" fill="#8c8c8c"/></svg>

</div>
</body>
</html>
